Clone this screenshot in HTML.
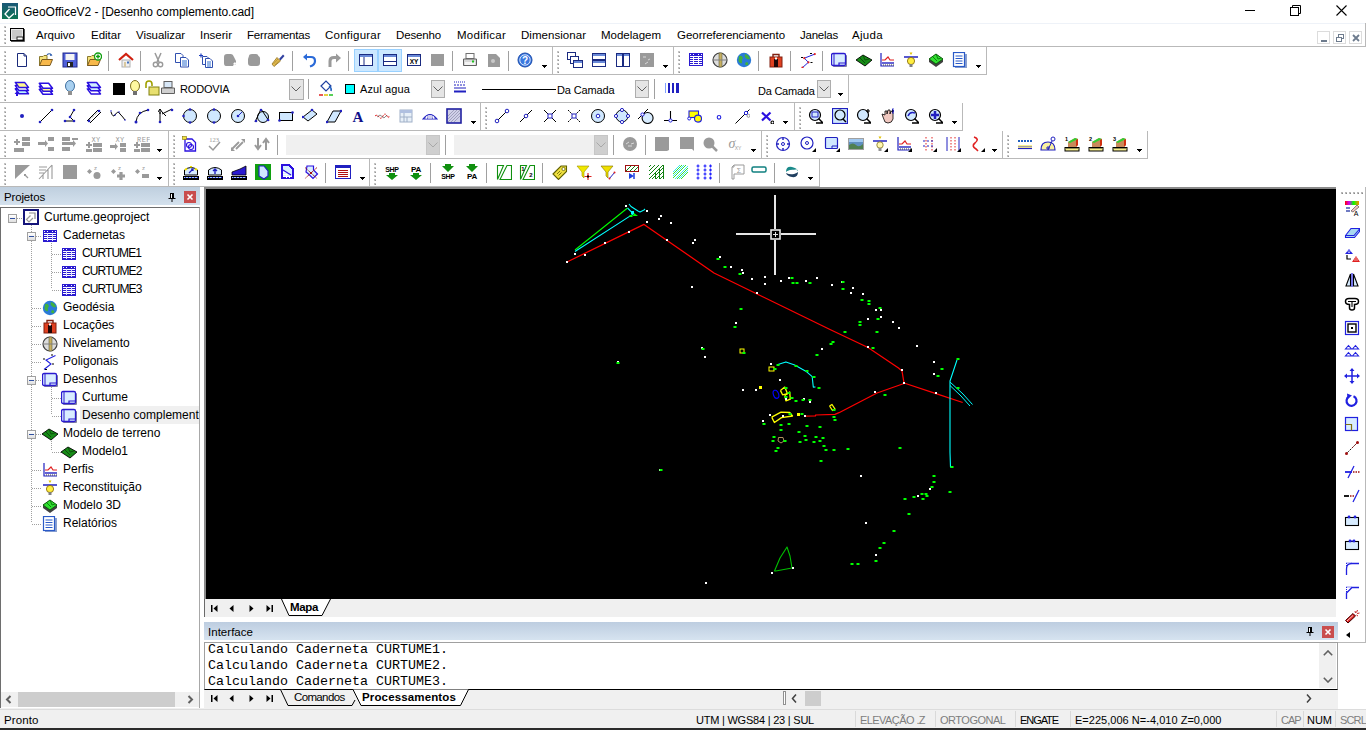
<!DOCTYPE html>
<html><head><meta charset="utf-8"><title>GeoOfficeV2</title>
<style>
html,body{margin:0;padding:0;width:1366px;height:730px;overflow:hidden;background:#fff;position:relative}
div,span,svg{position:absolute;display:block}
span{white-space:nowrap}
</style></head><body>
<svg style="left:2px;top:3px;" width="16" height="16" viewBox="0 0 16 16"><defs><linearGradient id="ag" x1="0" y1="0" x2="0" y2="1"><stop offset="0" stop-color="#1b5878"/><stop offset="1" stop-color="#0e7552"/></linearGradient></defs><rect x="0" y="0" width="16" height="16" fill="url(#ag)"/><path d="M6 4H13.5V12" fill="none" stroke="#fff" stroke-width="1.2"/><path d="M7.5 6L3 11L7 15L12 10.5" fill="none" stroke="#fff" stroke-width="1.3"/></svg>
<span style="left:23px;top:5.84px;font:normal 12px/1 'Liberation Sans',sans-serif;color:#000;letter-spacing:-0.023px;">GeoOfficeV2 - [Desenho complemento.cad]</span>
<div style="left:1245px;top:10px;width:10px;height:1px;background:#000"></div>
<svg style="left:1290px;top:5px;" width="11" height="11" viewBox="0 0 11 11"><path d="M2.5 2.5V0.5H10.5V8.5H8.5" fill="none" stroke="#000"/><rect x="0.5" y="2.5" width="8" height="8" fill="none" stroke="#000"/></svg>
<svg style="left:1336px;top:5px;" width="11" height="11" viewBox="0 0 11 11"><path d="M0.5 0.5L10.5 10.5M10.5 0.5L0.5 10.5" stroke="#000" stroke-width="1.1"/></svg>
<div style="left:0px;top:23px;width:1366px;height:1px;background:#eef2f8"></div>
<div style="left:0px;top:46px;width:1366px;height:1px;background:#b9b9b9"></div>
<div style="left:1365px;top:23px;width:1px;height:24px;background:#b9b9b9"></div>
<svg style="left:4px;top:26px;" width="2" height="18" viewBox="0 0 2 18"><rect x="0" y="0" width="2" height="2" fill="#c4c4c4"/><rect x="1" y="1" width="1" height="1" fill="#9a9a9a"/><rect x="0" y="4" width="2" height="2" fill="#c4c4c4"/><rect x="1" y="5" width="1" height="1" fill="#9a9a9a"/><rect x="0" y="8" width="2" height="2" fill="#c4c4c4"/><rect x="1" y="9" width="1" height="1" fill="#9a9a9a"/><rect x="0" y="12" width="2" height="2" fill="#c4c4c4"/><rect x="1" y="13" width="1" height="1" fill="#9a9a9a"/><rect x="0" y="16" width="2" height="2" fill="#c4c4c4"/><rect x="1" y="17" width="1" height="1" fill="#9a9a9a"/></svg>
<svg style="left:10px;top:28px;" width="16" height="15" viewBox="0 0 16 15"><rect x="0.5" y="0.5" width="13" height="12" fill="#e8e8e8" stroke="#000"/><rect x="2" y="2" width="10" height="9" fill="#c8c8c8"/><rect x="7" y="9" width="6" height="3" fill="#fff" stroke="#000" stroke-width="0.8"/><path d="M1 13.5H14.5V1" fill="none" stroke="#555" stroke-width="1"/></svg>
<span style="left:36px;top:30.27px;font:normal 11.5px/1 'Liberation Sans',sans-serif;color:#000;letter-spacing:0.001px;">Arquivo</span>
<span style="left:91px;top:30.27px;font:normal 11.5px/1 'Liberation Sans',sans-serif;color:#000;letter-spacing:-0.007px;">Editar</span>
<span style="left:136px;top:30.27px;font:normal 11.5px/1 'Liberation Sans',sans-serif;color:#000;letter-spacing:-0.064px;">Visualizar</span>
<span style="left:200px;top:30.27px;font:normal 11.5px/1 'Liberation Sans',sans-serif;color:#000;letter-spacing:0.007px;">Inserir</span>
<span style="left:247px;top:30.27px;font:normal 11.5px/1 'Liberation Sans',sans-serif;color:#000;letter-spacing:-0.199px;">Ferramentas</span>
<span style="left:325px;top:30.27px;font:normal 11.5px/1 'Liberation Sans',sans-serif;color:#000;letter-spacing:0.231px;">Configurar</span>
<span style="left:396px;top:30.27px;font:normal 11.5px/1 'Liberation Sans',sans-serif;color:#000;letter-spacing:-0.148px;">Desenho</span>
<span style="left:457px;top:30.27px;font:normal 11.5px/1 'Liberation Sans',sans-serif;color:#000;letter-spacing:0.261px;">Modificar</span>
<span style="left:521px;top:30.27px;font:normal 11.5px/1 'Liberation Sans',sans-serif;color:#000;letter-spacing:0.041px;">Dimensionar</span>
<span style="left:601px;top:30.27px;font:normal 11.5px/1 'Liberation Sans',sans-serif;color:#000;letter-spacing:-0.010px;">Modelagem</span>
<span style="left:677px;top:30.27px;font:normal 11.5px/1 'Liberation Sans',sans-serif;color:#000;letter-spacing:-0.035px;">Georreferenciamento</span>
<span style="left:800px;top:30.27px;font:normal 11.5px/1 'Liberation Sans',sans-serif;color:#000;letter-spacing:-0.234px;">Janelas</span>
<span style="left:852px;top:30.27px;font:normal 11.5px/1 'Liberation Sans',sans-serif;color:#000;letter-spacing:0.317px;">Ajuda</span>
<div style="left:1317px;top:31px;width:13px;height:13px;border:1px solid #dcdcdc;box-sizing:border-box;background:#fff"></div>
<div style="left:1333px;top:31px;width:13px;height:13px;border:1px solid #dcdcdc;box-sizing:border-box;background:#fff"></div>
<div style="left:1349px;top:31px;width:13px;height:13px;border:1px solid #dcdcdc;box-sizing:border-box;background:#fff"></div>
<div style="left:1321px;top:40px;width:6px;height:2px;background:#6d7b8d"></div>
<svg style="left:1336px;top:34px;" width="8" height="8" viewBox="0 0 8 8"><rect x="2.5" y="0.5" width="5" height="4" fill="none" stroke="#6d7b8d"/><rect x="0.5" y="3.5" width="5" height="4" fill="#fff" stroke="#6d7b8d"/></svg>
<svg style="left:1352px;top:34px;" width="8" height="8" viewBox="0 0 8 8"><path d="M1 1L7 7M7 1L1 7" stroke="#6d7b8d" stroke-width="1.8"/></svg>
<div style="left:0px;top:74px;width:553px;height:1px;background:#b9b9b9"></div>
<div style="left:552px;top:47px;width:1px;height:28px;background:#b9b9b9"></div>
<svg style="left:4px;top:51px;" width="2" height="22" viewBox="0 0 2 22"><rect x="0" y="0" width="2" height="2" fill="#c4c4c4"/><rect x="1" y="1" width="1" height="1" fill="#9a9a9a"/><rect x="0" y="4" width="2" height="2" fill="#c4c4c4"/><rect x="1" y="5" width="1" height="1" fill="#9a9a9a"/><rect x="0" y="8" width="2" height="2" fill="#c4c4c4"/><rect x="1" y="9" width="1" height="1" fill="#9a9a9a"/><rect x="0" y="12" width="2" height="2" fill="#c4c4c4"/><rect x="1" y="13" width="1" height="1" fill="#9a9a9a"/><rect x="0" y="16" width="2" height="2" fill="#c4c4c4"/><rect x="1" y="17" width="1" height="1" fill="#9a9a9a"/><rect x="0" y="20" width="2" height="2" fill="#c4c4c4"/><rect x="1" y="21" width="1" height="1" fill="#9a9a9a"/></svg>
<svg style="left:14px;top:52px;" width="16" height="16" viewBox="0 0 16 16"><path d="M3.5 1.5H10L12.5 4V14.5H3.5Z" fill="#fff" stroke="#1a2a7a"/><path d="M10 1.5V4H12.5" fill="none" stroke="#1a2a7a"/></svg>
<svg style="left:38px;top:52px;" width="16" height="16" viewBox="0 0 16 16"><path d="M1.5 4.5H5L6 3.5H9V13.5H1.5Z" fill="#f5e27a" stroke="#8a7a30"/><path d="M1.5 13.5L4 7.5H14.5L12 13.5Z" fill="#f7b84a" stroke="#7a5a20"/><path d="M9 3Q11 0.5 13.5 3" fill="none" stroke="#3060b0" stroke-width="1.2"/><path d="M12.5 1.5L14.5 3.5L12 4Z" fill="#3060b0"/></svg>
<svg style="left:62px;top:52px;" width="16" height="16" viewBox="0 0 16 16"><rect x="1" y="1" width="14" height="14" fill="#5060d8" stroke="#202890"/><rect x="3.5" y="2" width="9" height="6" fill="#f4f4f4"/><rect x="5" y="10" width="6" height="5" fill="#222"/><rect x="6" y="11" width="2" height="3" fill="#fff"/></svg>
<svg style="left:86px;top:52px;" width="16" height="16" viewBox="0 0 16 16"><path d="M1.5 4.5H5L6 3.5H9V13.5H1.5Z" fill="#f5e27a" stroke="#8a7a30"/><path d="M1.5 13.5L4 7.5H14.5L12 13.5Z" fill="#f7b84a" stroke="#7a5a20"/><circle cx="12" cy="4.5" r="3.5" fill="#fff" stroke="#10a010" stroke-width="1.3"/><path d="M12 2.5V6.5M10 4.5H14" stroke="#10a010" stroke-width="1.5"/></svg>
<div style="left:108px;top:51px;width:1px;height:20px;background:#a0a0a0"></div>
<svg style="left:118px;top:52px;" width="16" height="16" viewBox="0 0 16 16"><path d="M1 8L8 2L15 8" fill="none" stroke="#d02010" stroke-width="2.2"/><rect x="4" y="8" width="8" height="7" fill="#f0f0f0" stroke="#b0b0b0"/><rect x="6" y="10" width="2" height="5" fill="#d8c8a0"/><rect x="9" y="9.5" width="2" height="2" fill="#4070c0"/></svg>
<div style="left:140px;top:51px;width:1px;height:20px;background:#a0a0a0"></div>
<svg style="left:150px;top:52px;" width="16" height="16" viewBox="0 0 16 16"><path d="M5 1L9 10M11 1L7 10" stroke="#9a9a9a" stroke-width="1.5"/><circle cx="5.5" cy="12.5" r="2.2" fill="none" stroke="#9a9a9a" stroke-width="1.4"/><circle cx="10.5" cy="12.5" r="2.2" fill="none" stroke="#9a9a9a" stroke-width="1.4"/></svg>
<svg style="left:174px;top:52px;" width="16" height="16" viewBox="0 0 16 16"><path d="M1.5 1.5H7L9 3.5V10.5H1.5Z" fill="#fff" stroke="#3050b0"/><path d="M6.5 5.5H12L14.5 8V15H6.5Z" fill="#fff" stroke="#3050b0"/><path d="M8 9H13M8 11H13M8 13H13" stroke="#3070d0"/></svg>
<svg style="left:198px;top:52px;" width="16" height="16" viewBox="0 0 16 16"><path d="M1 3.5H5M3 1.5V5.5" stroke="#2040c0" stroke-width="1.2"/><path d="M4.5 4.5H9L11 6.5V12.5H4.5Z" fill="#fff" stroke="#3050b0"/><path d="M7.5 6.5H12L14.5 9V15.5H7.5Z" fill="#fff" stroke="#3050b0"/><path d="M9 10H13M9 12H13M9 14H13" stroke="#3070d0"/></svg>
<svg style="left:222px;top:52px;" width="16" height="16" viewBox="0 0 16 16"><path d="M2 5Q2 2 5 2H9Q11 2 12 5L14 9V13L12 12L11 14H4Q2 14 2 11Z" fill="#9a9a9a"/><path d="M11 12L13 10L15 13Z" fill="#fff"/></svg>
<svg style="left:246px;top:52px;" width="16" height="16" viewBox="0 0 16 16"><path d="M3 4Q3 2 6 2H10Q12 2 12.5 4Q14.5 5 14 8V11Q14 14 11 14H5Q2 14 2 11V7Z" fill="#9a9a9a"/></svg>
<svg style="left:270px;top:52px;" width="16" height="16" viewBox="0 0 16 16"><path d="M9 7L13 2.5L14.5 4L10.5 8.5Z" fill="#3040a0"/><path d="M2 12L7 5.5L10.5 9L4 14.5Z" fill="#e8c050" stroke="#907020" stroke-width="0.8"/><path d="M3.5 12L8 7M5 13L9 8.5" stroke="#a08030" stroke-width="0.7"/></svg>
<div style="left:292px;top:51px;width:1px;height:20px;background:#a0a0a0"></div>
<svg style="left:302px;top:52px;" width="16" height="16" viewBox="0 0 16 16"><path d="M4 5H9Q13 5 13 9Q13 13 8 14.5" fill="none" stroke="#2a6ad8" stroke-width="2.2"/><path d="M1 5L5 1.5V8.5Z" fill="#2a6ad8"/></svg>
<svg style="left:326px;top:52px;" width="16" height="16" viewBox="0 0 16 16"><path d="M4 15V9Q4 5.5 8 5.5H11" fill="none" stroke="#9a9a9a" stroke-width="3"/><path d="M10 1.5L15 6L10 10.5Z" fill="#9a9a9a"/></svg>
<div style="left:348px;top:51px;width:1px;height:20px;background:#a0a0a0"></div>
<div style="left:354px;top:49px;width:24px;height:23px;background:#cce8ff;border:1px solid #99d1ff;box-sizing:border-box"></div>
<div style="left:378px;top:49px;width:24px;height:23px;background:#cce8ff;border:1px solid #99d1ff;box-sizing:border-box"></div>
<svg style="left:358px;top:52px;" width="16" height="16" viewBox="0 0 16 16"><rect x="1.5" y="2.5" width="13" height="11" fill="#fff" stroke="#1a2a80"/><rect x="2" y="3" width="12" height="2" fill="#6a8ad8"/><path d="M6 5V13" stroke="#1a2a80"/></svg>
<svg style="left:382px;top:52px;" width="16" height="16" viewBox="0 0 16 16"><rect x="1.5" y="2.5" width="13" height="11" fill="#fff" stroke="#1a2a80"/><rect x="2" y="3" width="12" height="2" fill="#6a8ad8"/><path d="M2 9.5H14" stroke="#1a2a80"/></svg>
<svg style="left:406px;top:52px;" width="16" height="16" viewBox="0 0 16 16"><rect x="1.5" y="2.5" width="13" height="11" fill="#fff" stroke="#1a2a80"/><rect x="2" y="3" width="12" height="2" fill="#6a8ad8"/><text x="8" y="12" font-family="Liberation Sans" font-weight="bold" font-size="6.5" text-anchor="middle" fill="#000">XY</text></svg>
<svg style="left:430px;top:52px;" width="16" height="16" viewBox="0 0 16 16"><rect x="1" y="2" width="13" height="12" fill="#9a9a9a"/></svg>
<div style="left:452px;top:51px;width:1px;height:20px;background:#a0a0a0"></div>
<svg style="left:462px;top:52px;" width="16" height="16" viewBox="0 0 16 16"><rect x="4" y="1.5" width="8" height="5" fill="#fff" stroke="#707070"/><path d="M1.5 7H14.5V13.5H1.5Z" fill="#d8d8d8" stroke="#606060"/><rect x="3" y="10" width="10" height="3" fill="#f4f4f4"/><rect x="10" y="8.5" width="2" height="2" fill="#20c020"/></svg>
<svg style="left:486px;top:52px;" width="16" height="16" viewBox="0 0 16 16"><path d="M2 2H10L14 6V15H2Z" fill="#9a9a9a"/><circle cx="7" cy="9" r="2" fill="#c8c8c8"/></svg>
<div style="left:508px;top:51px;width:1px;height:20px;background:#a0a0a0"></div>
<svg style="left:517px;top:52px;" width="16" height="16" viewBox="0 0 16 16"><circle cx="8" cy="8" r="7" fill="#3a78e0" stroke="#1848a8"/><circle cx="8" cy="8" r="5.2" fill="none" stroke="#fff" stroke-width="0.8"/><text x="8" y="12" font-family="Liberation Sans" font-weight="bold" font-size="10" text-anchor="middle" fill="#fff">?</text></svg>
<svg style="left:542px;top:65px;" width="5" height="3" viewBox="0 0 5 3"><rect x="0" y="0" width="5" height="1" fill="#000"/><rect x="1" y="1" width="3" height="1" fill="#000"/><rect x="2" y="2" width="1" height="1" fill="#000"/></svg>
<div style="left:553px;top:74px;width:121px;height:1px;background:#b9b9b9"></div>
<div style="left:673px;top:47px;width:1px;height:28px;background:#b9b9b9"></div>
<svg style="left:557px;top:51px;" width="2" height="22" viewBox="0 0 2 22"><rect x="0" y="0" width="2" height="2" fill="#c4c4c4"/><rect x="1" y="1" width="1" height="1" fill="#9a9a9a"/><rect x="0" y="4" width="2" height="2" fill="#c4c4c4"/><rect x="1" y="5" width="1" height="1" fill="#9a9a9a"/><rect x="0" y="8" width="2" height="2" fill="#c4c4c4"/><rect x="1" y="9" width="1" height="1" fill="#9a9a9a"/><rect x="0" y="12" width="2" height="2" fill="#c4c4c4"/><rect x="1" y="13" width="1" height="1" fill="#9a9a9a"/><rect x="0" y="16" width="2" height="2" fill="#c4c4c4"/><rect x="1" y="17" width="1" height="1" fill="#9a9a9a"/><rect x="0" y="20" width="2" height="2" fill="#c4c4c4"/><rect x="1" y="21" width="1" height="1" fill="#9a9a9a"/></svg>
<svg style="left:567px;top:52px;" width="16" height="16" viewBox="0 0 16 16"><rect x="0.5" y="0.5" width="8" height="7" fill="#fff" stroke="#1a2a80"/><rect x="3.5" y="4.5" width="8" height="7" fill="#fff" stroke="#1a2a80"/><rect x="6.5" y="8.5" width="9" height="7" fill="#fff" stroke="#1a2a80"/><rect x="7" y="9" width="8" height="2" fill="#6a8ad8"/></svg>
<svg style="left:591px;top:52px;" width="16" height="16" viewBox="0 0 16 16"><rect x="1.5" y="1.5" width="13" height="6" fill="#fff" stroke="#1a2a80"/><rect x="1.5" y="8.5" width="13" height="6" fill="#fff" stroke="#1a2a80"/><rect x="2" y="2" width="12" height="2" fill="#6a8ad8"/><rect x="2" y="9" width="12" height="2" fill="#6a8ad8"/></svg>
<svg style="left:615px;top:52px;" width="16" height="16" viewBox="0 0 16 16"><rect x="1.5" y="1.5" width="6" height="13" fill="#fff" stroke="#1a2a80"/><rect x="8.5" y="1.5" width="6" height="13" fill="#fff" stroke="#1a2a80"/><rect x="2" y="2" width="5" height="2" fill="#6a8ad8"/><rect x="9" y="2" width="5" height="2" fill="#6a8ad8"/></svg>
<svg style="left:639px;top:52px;" width="16" height="16" viewBox="0 0 16 16"><rect x="1" y="1" width="14" height="14" fill="#9a9a9a"/><path d="M4 5H7M9 8L11 7M6 12L9 10" stroke="#d8d8d8"/></svg>
<svg style="left:663px;top:65px;" width="5" height="3" viewBox="0 0 5 3"><rect x="0" y="0" width="5" height="1" fill="#000"/><rect x="1" y="1" width="3" height="1" fill="#000"/><rect x="2" y="2" width="1" height="1" fill="#000"/></svg>
<div style="left:674px;top:74px;width:313px;height:1px;background:#b9b9b9"></div>
<div style="left:986px;top:47px;width:1px;height:28px;background:#b9b9b9"></div>
<svg style="left:678px;top:51px;" width="2" height="22" viewBox="0 0 2 22"><rect x="0" y="0" width="2" height="2" fill="#c4c4c4"/><rect x="1" y="1" width="1" height="1" fill="#9a9a9a"/><rect x="0" y="4" width="2" height="2" fill="#c4c4c4"/><rect x="1" y="5" width="1" height="1" fill="#9a9a9a"/><rect x="0" y="8" width="2" height="2" fill="#c4c4c4"/><rect x="1" y="9" width="1" height="1" fill="#9a9a9a"/><rect x="0" y="12" width="2" height="2" fill="#c4c4c4"/><rect x="1" y="13" width="1" height="1" fill="#9a9a9a"/><rect x="0" y="16" width="2" height="2" fill="#c4c4c4"/><rect x="1" y="17" width="1" height="1" fill="#9a9a9a"/><rect x="0" y="20" width="2" height="2" fill="#c4c4c4"/><rect x="1" y="21" width="1" height="1" fill="#9a9a9a"/></svg>
<svg style="left:688px;top:52px;" width="16" height="16" viewBox="0 0 16 16"><rect x="1" y="1" width="14" height="13" fill="#2a1ad0"/><rect x="2" y="4" width="12" height="1" fill="#fff"/><rect x="2" y="6" width="12" height="1" fill="#fff"/><rect x="2" y="8" width="12" height="1" fill="#fff"/><rect x="2" y="10" width="12" height="1" fill="#fff"/><rect x="2" y="12" width="12" height="1" fill="#fff"/><rect x="2" y="2" width="1" height="1" fill="#fff"/><rect x="5" y="2" width="1" height="1" fill="#fff"/><rect x="10" y="2" width="1" height="1" fill="#fff"/><rect x="13" y="2" width="1" height="1" fill="#fff"/><rect x="5" y="4" width="1" height="9" fill="#fff"/><rect x="10" y="4" width="1" height="9" fill="#fff"/></svg>
<svg style="left:712px;top:52px;" width="16" height="16" viewBox="0 0 16 16"><circle cx="8" cy="8" r="7" fill="#dcdcdc" stroke="#404040" stroke-width="1.2"/><rect x="7" y="1" width="3" height="14" fill="#c8b060" stroke="#606040" stroke-width="0.6"/><path d="M1 8H15" stroke="#808080"/></svg>
<svg style="left:736px;top:52px;" width="16" height="16" viewBox="0 0 16 16"><circle cx="8" cy="8" r="7.2" fill="#2a7ad8"/><path d="M3 4Q6 3 7 6Q5 8 6 11Q4 12 2.5 9Z M9 2Q13 3 14 7Q11 8 10 6Q8 5 9 2Z M10 10Q13 10 12 13Q10 14 9 12Z" fill="#40b040"/></svg>
<div style="left:758px;top:51px;width:1px;height:20px;background:#a0a0a0"></div>
<svg style="left:768px;top:52px;" width="16" height="16" viewBox="0 0 16 16"><rect x="2" y="5" width="12" height="10" fill="#e04020" stroke="#802010"/><path d="M5 5V2.5H11V5" fill="none" stroke="#802010" stroke-width="1.4"/><rect x="6" y="7" width="4" height="8" fill="#200808"/><rect x="7" y="5.5" width="2" height="2" fill="#fff"/></svg>
<div style="left:790px;top:51px;width:1px;height:20px;background:#a0a0a0"></div>
<svg style="left:800px;top:52px;" width="16" height="16" viewBox="0 0 16 16"><path d="M4.3 6.2L8.4 10.3L2.5 15.6M4.3 6.2L14.8 2.1" fill="none" stroke="#2020e0" stroke-width="1"/><circle cx="4.3" cy="6.2" r="1.1" fill="#e02020"/><circle cx="8.4" cy="10.3" r="1.1" fill="#e02020"/><circle cx="14.8" cy="2.1" r="1.1" fill="#e02020"/><circle cx="2.5" cy="15.6" r="1.1" fill="#e02020"/><path d="M1 5.5H3M10 1.5H12M10.5 10.5H12.5" stroke="#000" stroke-width="1"/></svg>
<div style="left:822px;top:51px;width:1px;height:20px;background:#a0a0a0"></div>
<svg style="left:831px;top:52px;" width="16" height="16" viewBox="0 0 16 16"><rect x="2" y="3" width="14" height="12" rx="1" fill="#8080a0"/><rect x="0.5" y="1.5" width="14" height="12" rx="1.5" fill="#d8ecff" stroke="#2a1ad0" stroke-width="1.3"/><path d="M3 2V13" stroke="#2a1ad0" stroke-width="1"/><path d="M8 13.5V11H14.5" fill="none" stroke="#2a1ad0" stroke-width="1.2"/></svg>
<svg style="left:856px;top:52px;" width="16" height="16" viewBox="0 0 16 16"><path d="M0 8L7 3L16 8L9 14Z" fill="#168a16" stroke="#000" stroke-width="0.9"/><path d="M4 6L9 11M7 3L9 8L13 7" fill="none" stroke="#0a4a0a" stroke-width="0.9"/></svg>
<svg style="left:879px;top:52px;" width="16" height="16" viewBox="0 0 16 16"><path d="M2 1V14H15" fill="none" stroke="#2020c0" stroke-width="1.2"/><path d="M3 8H6L9 5L11 8H15" fill="none" stroke="#e02020" stroke-width="1.2"/><path d="M3 11H15" stroke="#2020c0" stroke-width="1.4"/><path d="M4 13H15" stroke="#404040" stroke-dasharray="1 1"/></svg>
<svg style="left:903px;top:52px;" width="16" height="16" viewBox="0 0 16 16"><path d="M1 5H15" stroke="#2020c0" stroke-width="1.5"/><path d="M6.5 0.5H9.5L8 3Z" fill="#e0c000"/><circle cx="8" cy="9" r="3.6" fill="#ffee40" stroke="#806000" stroke-width="0.8"/><rect x="6.5" y="12" width="3" height="3" fill="#808080"/></svg>
<svg style="left:928px;top:52px;" width="16" height="16" viewBox="0 0 16 16"><path d="M1 7L8 2L15 7L15 10L8 15L1 10Z" fill="#404040"/><path d="M1 7L8 2L15 7L8 12Z" fill="#30e030" stroke="#106010"/><path d="M5 5L9 9M8 2L10 7L13 6" fill="none" stroke="#108010"/></svg>
<svg style="left:952px;top:52px;" width="16" height="16" viewBox="0 0 16 16"><rect x="3" y="2" width="12" height="14" fill="#8aa0d0"/><rect x="1.5" y="0.5" width="11" height="14" fill="#fff" stroke="#2a5ac8" stroke-width="1.2"/><path d="M3.5 4H10.5M3.5 6.5H10.5M3.5 9H10.5M3.5 11.5H10.5" stroke="#2a5ac8"/></svg>
<svg style="left:976px;top:65px;" width="5" height="3" viewBox="0 0 5 3"><rect x="0" y="0" width="5" height="1" fill="#000"/><rect x="1" y="1" width="3" height="1" fill="#000"/><rect x="2" y="2" width="1" height="1" fill="#000"/></svg>
<div style="left:0px;top:102px;width:849px;height:1px;background:#b9b9b9"></div>
<div style="left:848px;top:75px;width:1px;height:28px;background:#b9b9b9"></div>
<svg style="left:4px;top:79px;" width="2" height="22" viewBox="0 0 2 22"><rect x="0" y="0" width="2" height="2" fill="#c4c4c4"/><rect x="1" y="1" width="1" height="1" fill="#9a9a9a"/><rect x="0" y="4" width="2" height="2" fill="#c4c4c4"/><rect x="1" y="5" width="1" height="1" fill="#9a9a9a"/><rect x="0" y="8" width="2" height="2" fill="#c4c4c4"/><rect x="1" y="9" width="1" height="1" fill="#9a9a9a"/><rect x="0" y="12" width="2" height="2" fill="#c4c4c4"/><rect x="1" y="13" width="1" height="1" fill="#9a9a9a"/><rect x="0" y="16" width="2" height="2" fill="#c4c4c4"/><rect x="1" y="17" width="1" height="1" fill="#9a9a9a"/><rect x="0" y="20" width="2" height="2" fill="#c4c4c4"/><rect x="1" y="21" width="1" height="1" fill="#9a9a9a"/></svg>
<svg style="left:14px;top:80px;" width="16" height="16" viewBox="0 0 16 16"><path d="M1.3 8.8H10.6L14.5 13.8H5Z" fill="#b8f0ff" stroke="#2a10e0" stroke-width="1.5" stroke-linejoin="round"/><path d="M1.3 5.6H10.6L14.5 10.6H5Z" fill="#fff" stroke="#2a10e0" stroke-width="1.5" stroke-linejoin="round"/><path d="M1.3 2.4H10.6L14.5 7.4H5Z" fill="#fff890" stroke="#2a10e0" stroke-width="1.5" stroke-linejoin="round"/><path d="M3 11L5.5 14H4V16H2V14H0.5Z" fill="#2a10e0"/></svg>
<svg style="left:38px;top:80px;" width="16" height="16" viewBox="0 0 16 16"><path d="M1.3 9.3H10.6L14.5 14.3H5Z" fill="#fff" stroke="#2a10e0" stroke-width="1.5" stroke-linejoin="round"/><path d="M1.3 6.3H10.6L14.5 11.3H5Z" fill="#fff890" stroke="#2a10e0" stroke-width="1.5" stroke-linejoin="round"/><path d="M1.3 3.3H10.6L14.5 8.3H5Z" fill="#fff" stroke="#2a10e0" stroke-width="1.5" stroke-linejoin="round"/></svg>
<svg style="left:62px;top:80px;" width="16" height="16" viewBox="0 0 16 16"><ellipse cx="8" cy="6" rx="4.5" ry="5.5" fill="#a8d0f0" stroke="#4070a0"/><rect x="6" y="11" width="4" height="4" fill="#909090"/></svg>
<svg style="left:86px;top:80px;" width="16" height="16" viewBox="0 0 16 16"><path d="M1.3 8.9H10.6L14.5 13.9H5Z" fill="#fff" stroke="#2a10e0" stroke-width="1.5" stroke-linejoin="round"/><path d="M1.3 5.7H10.6L14.5 10.7H5Z" fill="#d0f0ff" stroke="#2a10e0" stroke-width="1.5" stroke-linejoin="round"/><path d="M1.3 2.5H10.6L14.5 7.5H5Z" fill="#d0f0ff" stroke="#2a10e0" stroke-width="1.5" stroke-linejoin="round"/></svg>
<div style="left:113px;top:83px;width:12px;height:12px;background:#000"></div>
<svg style="left:127px;top:80px;" width="16" height="16" viewBox="0 0 16 16"><ellipse cx="8" cy="6" rx="4.5" ry="5.5" fill="#fff8a0" stroke="#807020"/><rect x="6" y="11" width="4" height="4" fill="#707070"/></svg>
<svg style="left:144px;top:80px;" width="16" height="16" viewBox="0 0 16 16"><path d="M2 8V4Q2 1 5 1Q8 1 8 4V6" fill="none" stroke="#a0a000" stroke-width="1.6"/><rect x="5" y="7" width="10" height="8" fill="#e8e070" stroke="#808010"/></svg>
<svg style="left:160px;top:80px;" width="16" height="16" viewBox="0 0 16 16"><rect x="4" y="1.5" width="8" height="6" fill="#d8e8f8" stroke="#606060"/><path d="M1.5 8H14.5V13.5H1.5Z" fill="#d0d0d0" stroke="#606060"/></svg>
<span style="left:180px;top:83.69px;font:normal 11px/1 'Liberation Sans',sans-serif;color:#000;letter-spacing:-0.176px;">RODOVIA</span>
<div style="left:289px;top:79px;width:15px;height:21px;background:#e5e5e5;border:1px solid #adadad;box-sizing:border-box"></div>
<svg style="left:291px;top:86px;" width="10" height="6" viewBox="0 0 10 6"><path d="M0.5 0.5L5 5L9.5 0.5" fill="none" stroke="#606060"/></svg>
<div style="left:308px;top:79px;width:1px;height:20px;background:#a0a0a0"></div>
<svg style="left:318px;top:80px;" width="16" height="16" viewBox="0 0 16 16"><path d="M3 6L8 1L13 6L8 11Z" fill="#fff" stroke="#2040a0" stroke-width="1.2"/><path d="M11 6Q14 8 13 11" fill="none" stroke="#2060c0" stroke-width="1.5"/><path d="M1 15H5" stroke="#e02020" stroke-width="1.5"/><path d="M6 15H10" stroke="#e0c000" stroke-width="1.5"/><path d="M11 15H15" stroke="#20c020" stroke-width="1.5"/></svg>
<div style="left:345px;top:84px;width:10px;height:10px;background:#00ffff;border:1px solid #000;box-sizing:border-box"></div>
<span style="left:360px;top:83.69px;font:normal 11px/1 'Liberation Sans',sans-serif;color:#000;letter-spacing:0.119px;">Azul agua</span>
<div style="left:431px;top:80px;width:14px;height:18px;background:#e5e5e5;border:1px solid #adadad;box-sizing:border-box"></div>
<svg style="left:433px;top:86px;" width="10" height="6" viewBox="0 0 10 6"><path d="M0.5 0.5L5 5L9.5 0.5" fill="none" stroke="#606060"/></svg>
<svg style="left:452px;top:80px;" width="16" height="16" viewBox="0 0 16 16"><path d="M2 2H14" stroke="#2020c0" stroke-dasharray="1 1"/><path d="M2 5H14" stroke="#2020c0" stroke-dasharray="2 1"/><path d="M2 8H14" stroke="#2020c0"/><path d="M2 11.5H14" stroke="#2020c0" stroke-width="2"/></svg>
<div style="left:482px;top:89px;width:74px;height:1px;background:#000"></div>
<span style="left:557px;top:84.69px;font:normal 11px/1 'Liberation Sans',sans-serif;color:#000;letter-spacing:-0.133px;">Da Camada</span>
<div style="left:635px;top:80px;width:14px;height:18px;background:#e5e5e5;border:1px solid #adadad;box-sizing:border-box"></div>
<svg style="left:637px;top:86px;" width="10" height="6" viewBox="0 0 10 6"><path d="M0.5 0.5L5 5L9.5 0.5" fill="none" stroke="#606060"/></svg>
<div style="left:654px;top:79px;width:1px;height:20px;background:#a0a0a0"></div>
<svg style="left:664px;top:81px;" width="16" height="16" viewBox="0 0 16 16"><rect x="1" y="2" width="1" height="10" fill="#80a0ff"/><rect x="4" y="2" width="2" height="10" fill="#2020c0"/><rect x="8" y="2" width="2" height="10" fill="#2020c0"/><rect x="12" y="2" width="3" height="10" fill="#2020c0"/></svg>
<span style="left:758px;top:85.69px;font:normal 11px/1 'Liberation Sans',sans-serif;color:#000;letter-spacing:-0.244px;">Da Camada</span>
<div style="left:817px;top:80px;width:14px;height:18px;background:#e5e5e5;border:1px solid #adadad;box-sizing:border-box"></div>
<svg style="left:819px;top:86px;" width="10" height="6" viewBox="0 0 10 6"><path d="M0.5 0.5L5 5L9.5 0.5" fill="none" stroke="#606060"/></svg>
<svg style="left:838px;top:93px;" width="5" height="3" viewBox="0 0 5 3"><rect x="0" y="0" width="5" height="1" fill="#000"/><rect x="1" y="1" width="3" height="1" fill="#000"/><rect x="2" y="2" width="1" height="1" fill="#000"/></svg>
<div style="left:0px;top:130px;width:481px;height:1px;background:#b9b9b9"></div>
<div style="left:480px;top:103px;width:1px;height:28px;background:#b9b9b9"></div>
<svg style="left:4px;top:107px;" width="2" height="22" viewBox="0 0 2 22"><rect x="0" y="0" width="2" height="2" fill="#c4c4c4"/><rect x="1" y="1" width="1" height="1" fill="#9a9a9a"/><rect x="0" y="4" width="2" height="2" fill="#c4c4c4"/><rect x="1" y="5" width="1" height="1" fill="#9a9a9a"/><rect x="0" y="8" width="2" height="2" fill="#c4c4c4"/><rect x="1" y="9" width="1" height="1" fill="#9a9a9a"/><rect x="0" y="12" width="2" height="2" fill="#c4c4c4"/><rect x="1" y="13" width="1" height="1" fill="#9a9a9a"/><rect x="0" y="16" width="2" height="2" fill="#c4c4c4"/><rect x="1" y="17" width="1" height="1" fill="#9a9a9a"/><rect x="0" y="20" width="2" height="2" fill="#c4c4c4"/><rect x="1" y="21" width="1" height="1" fill="#9a9a9a"/></svg>
<svg style="left:14px;top:108px;" width="16" height="16" viewBox="0 0 16 16"><circle cx="8" cy="8" r="2" fill="#2020c0"/></svg>
<svg style="left:38px;top:108px;" width="16" height="16" viewBox="0 0 16 16"><path d="M2 14L14 2" stroke="#000"/><circle cx="2" cy="14" r="1.3" fill="#2020c0"/><circle cx="14" cy="2" r="1.3" fill="#2020c0"/></svg>
<svg style="left:62px;top:108px;" width="16" height="16" viewBox="0 0 16 16"><path d="M3 13H12L8 9L12 2" fill="none" stroke="#000"/><circle cx="3" cy="13" r="1.3" fill="#2020c0"/><circle cx="12" cy="13" r="1.3" fill="#2020c0"/><circle cx="8" cy="9" r="1.3" fill="#2020c0"/><circle cx="12" cy="2" r="1.3" fill="#2020c0"/></svg>
<svg style="left:86px;top:108px;" width="16" height="16" viewBox="0 0 16 16"><path d="M1 13L12 2M4 15L15 4" stroke="#000"/><path d="M3 12L13 3" stroke="#808080" stroke-dasharray="1 1"/><circle cx="3" cy="13" r="1.3" fill="#2020c0"/><circle cx="13" cy="3" r="1.3" fill="#2020c0"/></svg>
<svg style="left:110px;top:108px;" width="16" height="16" viewBox="0 0 16 16"><path d="M1 4Q3 10 5 7Q8 2 10 6Q13 9 15 12" fill="none" stroke="#000"/><circle cx="1" cy="3" r="0.8" fill="#2020c0"/><circle cx="5" cy="7" r="0.8" fill="#2020c0"/><circle cx="9" cy="4" r="0.8" fill="#2020c0"/><circle cx="15" cy="12" r="0.8" fill="#2020c0"/></svg>
<svg style="left:134px;top:108px;" width="16" height="16" viewBox="0 0 16 16"><path d="M2 14Q3 4 14 2" fill="none" stroke="#000"/><circle cx="2" cy="14" r="1.5" fill="#2020c0"/><circle cx="6" cy="5" r="1.3" fill="#2020c0"/><circle cx="14" cy="2" r="1.3" fill="#2020c0"/></svg>
<svg style="left:158px;top:108px;" width="16" height="16" viewBox="0 0 16 16"><path d="M2 14V4M4 6L14 1M4 4L8 8" fill="none" stroke="#000"/><circle cx="2" cy="14" r="1.3" fill="#2020c0"/><circle cx="14" cy="2" r="1.3" fill="#2020c0"/><path d="M2 1L2 6M0 4L2 1L4 4" fill="none" stroke="#000"/></svg>
<svg style="left:182px;top:108px;" width="16" height="16" viewBox="0 0 16 16"><circle cx="8" cy="8" r="6.5" fill="#d0e8ff" stroke="#000"/><circle cx="8" cy="1.5" r="1.3" fill="#2020c0"/><circle cx="8" cy="14.5" r="1.3" fill="#2020c0"/><circle cx="1.5" cy="8" r="1.3" fill="#2020c0"/></svg>
<svg style="left:206px;top:108px;" width="16" height="16" viewBox="0 0 16 16"><circle cx="8" cy="8" r="6.5" fill="#d0e8ff" stroke="#000"/><circle cx="8" cy="1.5" r="1.3" fill="#2020c0"/><circle cx="8" cy="14.5" r="1.3" fill="#2020c0"/></svg>
<svg style="left:230px;top:108px;" width="16" height="16" viewBox="0 0 16 16"><circle cx="8" cy="8" r="6.5" fill="#d0e8ff" stroke="#000"/><circle cx="8" cy="8" r="1.3" fill="#2020c0"/><path d="M8 8L12 4" stroke="#2020c0"/></svg>
<svg style="left:254px;top:108px;" width="16" height="16" viewBox="0 0 16 16"><circle cx="9" cy="9" r="5.5" fill="#d0e8ff" stroke="#000"/><path d="M1 14L7 1L15 13" fill="none" stroke="#000"/><circle cx="7" cy="2" r="1.3" fill="#2020c0"/><circle cx="2" cy="13" r="1.3" fill="#2020c0"/><circle cx="14" cy="12" r="1.3" fill="#2020c0"/></svg>
<svg style="left:278px;top:108px;" width="16" height="16" viewBox="0 0 16 16"><rect x="1.5" y="4.5" width="13" height="8" fill="#d0e8ff" stroke="#000"/><circle cx="1.5" cy="12.5" r="1.3" fill="#2020c0"/><circle cx="14.5" cy="4.5" r="1.3" fill="#2020c0"/></svg>
<svg style="left:302px;top:108px;" width="16" height="16" viewBox="0 0 16 16"><path d="M1 9L10 2L15 6L6 13Z" fill="#d0e8ff" stroke="#000"/><circle cx="1" cy="9" r="1.3" fill="#2020c0"/><circle cx="10" cy="2" r="1.3" fill="#2020c0"/></svg>
<svg style="left:326px;top:108px;" width="16" height="16" viewBox="0 0 16 16"><path d="M1 14L7 3H15L9 14Z" fill="#d0e8ff" stroke="#000"/><circle cx="1" cy="14" r="1.3" fill="#2020c0"/><circle cx="15" cy="3" r="1.3" fill="#2020c0"/></svg>
<svg style="left:350px;top:108px;" width="16" height="16" viewBox="0 0 16 16"><text x="8" y="14" font-family="Liberation Serif" font-weight="bold" font-size="15" text-anchor="middle" fill="#10108a">A</text></svg>
<svg style="left:374px;top:108px;" width="16" height="16" viewBox="0 0 16 16"><path d="M1 8Q3 6 5 9T9 8T13 8T15 7" fill="none" stroke="#e02020" stroke-width="1" stroke-dasharray="2 1"/><path d="M3 9L6 7L10 10L13 7" fill="none" stroke="#404040" stroke-width="0.6"/></svg>
<svg style="left:398px;top:108px;" width="16" height="16" viewBox="0 0 16 16"><rect x="2" y="2" width="12" height="12" fill="#e8f0f8" stroke="#a0b0c8"/><rect x="2" y="2" width="12" height="3" fill="#b0c0e0"/><path d="M6 5V14M2 9H14M9 9V14" stroke="#a0b0c8"/></svg>
<svg style="left:422px;top:108px;" width="16" height="16" viewBox="0 0 16 16"><path d="M1 11Q8 2 15 11Z" fill="#a0a0e0" stroke="#2020c0" stroke-width="1.2"/><path d="M4 11L5 8M7 11V7M9 11V7M12 11L11 8" stroke="#fff"/></svg>
<svg style="left:446px;top:108px;" width="16" height="16" viewBox="0 0 16 16"><rect x="1" y="1" width="14" height="14" fill="#d0d0e8" stroke="#2020a0" stroke-width="1.6"/><path d="M2 8L8 2M2 14L14 2M8 14L14 8M2 11L11 2M5 14L14 5" stroke="#8080a0" stroke-width="0.6"/></svg>
<svg style="left:471px;top:121px;" width="5" height="3" viewBox="0 0 5 3"><rect x="0" y="0" width="5" height="1" fill="#000"/><rect x="1" y="1" width="3" height="1" fill="#000"/><rect x="2" y="2" width="1" height="1" fill="#000"/></svg>
<div style="left:481px;top:130px;width:314px;height:1px;background:#b9b9b9"></div>
<div style="left:794px;top:103px;width:1px;height:28px;background:#b9b9b9"></div>
<svg style="left:485px;top:107px;" width="2" height="22" viewBox="0 0 2 22"><rect x="0" y="0" width="2" height="2" fill="#c4c4c4"/><rect x="1" y="1" width="1" height="1" fill="#9a9a9a"/><rect x="0" y="4" width="2" height="2" fill="#c4c4c4"/><rect x="1" y="5" width="1" height="1" fill="#9a9a9a"/><rect x="0" y="8" width="2" height="2" fill="#c4c4c4"/><rect x="1" y="9" width="1" height="1" fill="#9a9a9a"/><rect x="0" y="12" width="2" height="2" fill="#c4c4c4"/><rect x="1" y="13" width="1" height="1" fill="#9a9a9a"/><rect x="0" y="16" width="2" height="2" fill="#c4c4c4"/><rect x="1" y="17" width="1" height="1" fill="#9a9a9a"/><rect x="0" y="20" width="2" height="2" fill="#c4c4c4"/><rect x="1" y="21" width="1" height="1" fill="#9a9a9a"/></svg>
<svg style="left:494px;top:108px;" width="16" height="16" viewBox="0 0 16 16"><path d="M3 13L13 3" stroke="#000"/><circle cx="3" cy="13" r="1.8" fill="#fff" stroke="#2020c0"/><circle cx="13" cy="3" r="1.8" fill="#fff" stroke="#2020c0"/></svg>
<svg style="left:518px;top:108px;" width="16" height="16" viewBox="0 0 16 16"><path d="M2 14L14 2" stroke="#000"/><circle cx="8" cy="8" r="1.8" fill="#fff" stroke="#2020c0"/></svg>
<svg style="left:542px;top:108px;" width="16" height="16" viewBox="0 0 16 16"><path d="M2 2L14 14M14 2L2 14" stroke="#000"/><rect x="6" y="6" width="4" height="4" fill="#fff" stroke="#2020c0"/></svg>
<svg style="left:566px;top:108px;" width="16" height="16" viewBox="0 0 16 16"><path d="M2 2L14 14M14 2L2 14" stroke="#000" stroke-dasharray="2 1"/><rect x="6" y="6" width="4" height="4" fill="#fff" stroke="#2020c0"/></svg>
<svg style="left:590px;top:108px;" width="16" height="16" viewBox="0 0 16 16"><circle cx="8" cy="8" r="6.5" fill="#d0e8ff" stroke="#000"/><circle cx="8" cy="8" r="1.8" fill="#fff" stroke="#2020c0"/></svg>
<svg style="left:614px;top:108px;" width="16" height="16" viewBox="0 0 16 16"><circle cx="8" cy="8" r="6" fill="#d0e8ff" stroke="#000"/><circle cx="8" cy="2" r="1.6" fill="#fff" stroke="#2020c0"/><circle cx="8" cy="14" r="1.6" fill="#fff" stroke="#2020c0"/><circle cx="2" cy="8" r="1.6" fill="#fff" stroke="#2020c0"/><circle cx="14" cy="8" r="1.6" fill="#fff" stroke="#2020c0"/></svg>
<svg style="left:638px;top:108px;" width="16" height="16" viewBox="0 0 16 16"><circle cx="9.6" cy="10" r="5.5" fill="#d8ecff" stroke="#000" stroke-width="1.1"/><path d="M0 11L10 1" stroke="#000"/><circle cx="4.5" cy="6.5" r="1.6" fill="#fff" stroke="#2020e0"/></svg>
<svg style="left:662px;top:108px;" width="16" height="16" viewBox="0 0 16 16"><path d="M2 12.5H15M8.5 3V12" stroke="#000" stroke-width="1.1"/><circle cx="8.5" cy="12.5" r="1.6" fill="#fff" stroke="#2020e0"/></svg>
<svg style="left:686px;top:108px;" width="16" height="16" viewBox="0 0 16 16"><rect x="3" y="3" width="9.5" height="6.5" fill="#ffff00" stroke="#2020e0" stroke-width="1.1"/><circle cx="12" cy="10.6" r="3.5" fill="#ffff00" stroke="#2020e0" stroke-width="1.1"/><circle cx="3.2" cy="10.5" r="1.5" fill="#fff" stroke="#2020e0"/></svg>
<svg style="left:710px;top:108px;" width="16" height="16" viewBox="0 0 16 16"><circle cx="9" cy="9.3" r="1.8" fill="#fff" stroke="#2020e0" stroke-width="1.1"/></svg>
<svg style="left:734px;top:108px;" width="16" height="16" viewBox="0 0 16 16"><path d="M1.5 15.5L15.5 1.5" stroke="#000"/><circle cx="12" cy="5" r="1.7" fill="#fff" stroke="#2020e0"/><circle cx="14.5" cy="7.8" r="1.5" fill="#fff" stroke="#909090"/></svg>
<svg style="left:758px;top:108px;" width="16" height="16" viewBox="0 0 16 16"><path d="M4 4.5L12.5 12.5M12.5 4.5L4 12.5" stroke="#2a10e0" stroke-width="2.2"/><circle cx="14.5" cy="14.5" r="1.5" fill="#fff" stroke="#000" stroke-width="1.1"/></svg>
<svg style="left:783px;top:121px;" width="5" height="3" viewBox="0 0 5 3"><rect x="0" y="0" width="5" height="1" fill="#000"/><rect x="1" y="1" width="3" height="1" fill="#000"/><rect x="2" y="2" width="1" height="1" fill="#000"/></svg>
<div style="left:795px;top:130px;width:168px;height:1px;background:#b9b9b9"></div>
<div style="left:962px;top:103px;width:1px;height:28px;background:#b9b9b9"></div>
<svg style="left:799px;top:107px;" width="2" height="22" viewBox="0 0 2 22"><rect x="0" y="0" width="2" height="2" fill="#c4c4c4"/><rect x="1" y="1" width="1" height="1" fill="#9a9a9a"/><rect x="0" y="4" width="2" height="2" fill="#c4c4c4"/><rect x="1" y="5" width="1" height="1" fill="#9a9a9a"/><rect x="0" y="8" width="2" height="2" fill="#c4c4c4"/><rect x="1" y="9" width="1" height="1" fill="#9a9a9a"/><rect x="0" y="12" width="2" height="2" fill="#c4c4c4"/><rect x="1" y="13" width="1" height="1" fill="#9a9a9a"/><rect x="0" y="16" width="2" height="2" fill="#c4c4c4"/><rect x="1" y="17" width="1" height="1" fill="#9a9a9a"/><rect x="0" y="20" width="2" height="2" fill="#c4c4c4"/><rect x="1" y="21" width="1" height="1" fill="#9a9a9a"/></svg>
<svg style="left:808px;top:108px;" width="16" height="16" viewBox="0 0 16 16"><circle cx="7" cy="7" r="5.5" fill="#d0e8ff" stroke="#000" stroke-width="1.2"/><path d="M10.5 10.5L14.5 14.5M8 15H15" stroke="#000" stroke-width="1.5"/><rect x="4" y="4" width="6" height="5" fill="none" stroke="#2020c0"/></svg>
<svg style="left:832px;top:108px;" width="16" height="16" viewBox="0 0 16 16"><rect x="0.5" y="0.5" width="15" height="15" fill="#d0e8ff" stroke="#2020c0" stroke-width="1.2"/><circle cx="8" cy="7" r="5" fill="#d0e8ff" stroke="#000" stroke-width="1.2"/><path d="M11 11L14 14" stroke="#000" stroke-width="1.5"/></svg>
<svg style="left:856px;top:108px;" width="16" height="16" viewBox="0 0 16 16"><circle cx="7" cy="7" r="5.5" fill="#d0e8ff" stroke="#000" stroke-width="1.2"/><path d="M10.5 10.5L14.5 14.5M8 15H15" stroke="#000" stroke-width="1.5"/><path d="M12 1V5M10 3H14" stroke="#000" stroke-width="1.2"/></svg>
<svg style="left:880px;top:108px;" width="16" height="16" viewBox="0 0 16 16"><path d="M3 9L2 6L5 7L5 3L7 3L7 6L8 2L10 2L10 6L11 3L13 4L13 11Q12 15 8 15L5 14Z" fill="#f0c8c0" stroke="#000" stroke-width="0.8"/><path d="M12 1L14 3L12 5M13 0V6" stroke="#2020c0" stroke-width="0.8"/></svg>
<svg style="left:904px;top:108px;" width="16" height="16" viewBox="0 0 16 16"><circle cx="7" cy="7" r="5.5" fill="#d0e8ff" stroke="#000" stroke-width="1.2"/><path d="M10.5 10.5L14.5 14.5M8 15H15" stroke="#000" stroke-width="1.5"/><path d="M4 8Q6 3 11 5" fill="none" stroke="#2020c0" stroke-width="1.5"/></svg>
<svg style="left:928px;top:108px;" width="16" height="16" viewBox="0 0 16 16"><circle cx="7" cy="7" r="5.5" fill="#d0e8ff" stroke="#000" stroke-width="1.2"/><path d="M10.5 10.5L14.5 14.5M8 15H15" stroke="#000" stroke-width="1.5"/><path d="M7 3V11M3 7H11" stroke="#2020c0" stroke-width="2.5"/></svg>
<svg style="left:952px;top:121px;" width="5" height="3" viewBox="0 0 5 3"><rect x="0" y="0" width="5" height="1" fill="#000"/><rect x="1" y="1" width="3" height="1" fill="#000"/><rect x="2" y="2" width="1" height="1" fill="#000"/></svg>
<div style="left:0px;top:158px;width:169px;height:1px;background:#b9b9b9"></div>
<div style="left:168px;top:131px;width:1px;height:28px;background:#b9b9b9"></div>
<svg style="left:4px;top:135px;" width="2" height="22" viewBox="0 0 2 22"><rect x="0" y="0" width="2" height="2" fill="#c4c4c4"/><rect x="1" y="1" width="1" height="1" fill="#9a9a9a"/><rect x="0" y="4" width="2" height="2" fill="#c4c4c4"/><rect x="1" y="5" width="1" height="1" fill="#9a9a9a"/><rect x="0" y="8" width="2" height="2" fill="#c4c4c4"/><rect x="1" y="9" width="1" height="1" fill="#9a9a9a"/><rect x="0" y="12" width="2" height="2" fill="#c4c4c4"/><rect x="1" y="13" width="1" height="1" fill="#9a9a9a"/><rect x="0" y="16" width="2" height="2" fill="#c4c4c4"/><rect x="1" y="17" width="1" height="1" fill="#9a9a9a"/><rect x="0" y="20" width="2" height="2" fill="#c4c4c4"/><rect x="1" y="21" width="1" height="1" fill="#9a9a9a"/></svg>
<svg style="left:14px;top:136px;" width="16" height="16" viewBox="0 0 16 16"><rect x="0" y="5" width="6" height="2" fill="#9a9a9a"/><rect x="2" y="3" width="2" height="6" fill="#9a9a9a"/><rect x="8" y="1" width="8" height="4" fill="#9a9a9a"/><rect x="8" y="6" width="8" height="4" fill="#9a9a9a"/><rect x="0" y="12" width="10" height="4" fill="#9a9a9a"/></svg>
<svg style="left:38px;top:136px;" width="16" height="16" viewBox="0 0 16 16"><rect x="0" y="6" width="7" height="3" fill="#9a9a9a"/><path d="M7 4L10 7.5L7 11Z" fill="#9a9a9a"/><rect x="10" y="1" width="6" height="4" fill="#9a9a9a"/><rect x="10" y="11" width="6" height="4" fill="#9a9a9a"/></svg>
<svg style="left:62px;top:136px;" width="16" height="16" viewBox="0 0 16 16"><rect x="0" y="1" width="8" height="4" fill="#9a9a9a"/><rect x="10" y="2" width="6" height="2" fill="#9a9a9a"/><rect x="0" y="6" width="11" height="3" fill="#9a9a9a"/><path d="M11 4L14 7.5L11 11Z" fill="#9a9a9a"/><rect x="0" y="11" width="8" height="4" fill="#9a9a9a"/></svg>
<svg style="left:86px;top:136px;" width="16" height="16" viewBox="0 0 16 16"><text x="10" y="5.5" font-family="Liberation Mono" font-size="7" text-anchor="middle" fill="#9a9a9a" letter-spacing="0.4">XY</text><rect x="0" y="8" width="6" height="2" fill="#9a9a9a"/><rect x="2" y="6" width="2" height="6" fill="#9a9a9a"/><rect x="7" y="7" width="9" height="4" fill="#9a9a9a"/><rect x="7" y="12" width="9" height="4" fill="#9a9a9a"/><rect x="0" y="13" width="6" height="3" fill="#9a9a9a"/></svg>
<svg style="left:110px;top:136px;" width="16" height="16" viewBox="0 0 16 16"><text x="10" y="5.5" font-family="Liberation Mono" font-size="7" text-anchor="middle" fill="#9a9a9a" letter-spacing="0.4">XY</text><rect x="0" y="9" width="5" height="3" fill="#9a9a9a"/><path d="M5 7L8 10.5L5 14Z" fill="#9a9a9a"/><rect x="10" y="7" width="6" height="4" fill="#9a9a9a"/><rect x="10" y="12" width="6" height="4" fill="#9a9a9a"/></svg>
<svg style="left:134px;top:136px;" width="16" height="16" viewBox="0 0 16 16"><text x="10" y="5.5" font-family="Liberation Mono" font-size="7" text-anchor="middle" fill="#9a9a9a" letter-spacing="0.4">REF</text><rect x="0" y="8" width="6" height="2" fill="#9a9a9a"/><rect x="2" y="6" width="2" height="6" fill="#9a9a9a"/><rect x="7" y="7" width="9" height="4" fill="#9a9a9a"/><rect x="7" y="12" width="9" height="4" fill="#9a9a9a"/><rect x="0" y="13" width="6" height="3" fill="#9a9a9a"/></svg>
<svg style="left:157px;top:149px;" width="5" height="3" viewBox="0 0 5 3"><rect x="0" y="0" width="5" height="1" fill="#000"/><rect x="1" y="1" width="3" height="1" fill="#000"/><rect x="2" y="2" width="1" height="1" fill="#000"/></svg>
<div style="left:169px;top:158px;width:593px;height:1px;background:#b9b9b9"></div>
<div style="left:761px;top:131px;width:1px;height:28px;background:#b9b9b9"></div>
<svg style="left:173px;top:135px;" width="2" height="22" viewBox="0 0 2 22"><rect x="0" y="0" width="2" height="2" fill="#c4c4c4"/><rect x="1" y="1" width="1" height="1" fill="#9a9a9a"/><rect x="0" y="4" width="2" height="2" fill="#c4c4c4"/><rect x="1" y="5" width="1" height="1" fill="#9a9a9a"/><rect x="0" y="8" width="2" height="2" fill="#c4c4c4"/><rect x="1" y="9" width="1" height="1" fill="#9a9a9a"/><rect x="0" y="12" width="2" height="2" fill="#c4c4c4"/><rect x="1" y="13" width="1" height="1" fill="#9a9a9a"/><rect x="0" y="16" width="2" height="2" fill="#c4c4c4"/><rect x="1" y="17" width="1" height="1" fill="#9a9a9a"/><rect x="0" y="20" width="2" height="2" fill="#c4c4c4"/><rect x="1" y="21" width="1" height="1" fill="#9a9a9a"/></svg>
<svg style="left:182px;top:136px;" width="16" height="16" viewBox="0 0 16 16"><path d="M3 3H10L13.5 6.5V15H3Z" fill="#fff" stroke="#2a10e0" stroke-width="1.3"/><circle cx="7" cy="9" r="2.5" fill="none" stroke="#2a10e0" stroke-width="1.1"/><circle cx="9" cy="11" r="2.5" fill="none" stroke="#2a10e0" stroke-width="1.1"/><rect x="0.5" y="0.5" width="4" height="3" fill="#f0e040" stroke="#807000" stroke-width="0.6"/></svg>
<svg style="left:206px;top:136px;" width="16" height="16" viewBox="0 0 16 16"><text x="8" y="6" font-family="Liberation Serif" font-size="6.5" text-anchor="middle" fill="#9a9a9a">123</text><path d="M3 10L7 14L14 6" fill="none" stroke="#9a9a9a" stroke-width="1.5"/></svg>
<svg style="left:230px;top:136px;" width="16" height="16" viewBox="0 0 16 16"><path d="M2 13L9 6M6 13L13 6" stroke="#9a9a9a" stroke-width="1.8"/><path d="M11 3H15V7Z" fill="#9a9a9a"/><path d="M1 15V11L5 15Z" fill="#9a9a9a"/></svg>
<svg style="left:254px;top:136px;" width="16" height="16" viewBox="0 0 16 16"><path d="M4 2V12M1 9L4 13L7 9" fill="none" stroke="#9a9a9a" stroke-width="2"/><path d="M12 14V4M9 7L12 3L15 7" fill="none" stroke="#9a9a9a" stroke-width="2"/></svg>
<div style="left:277px;top:135px;width:1px;height:20px;background:#a0a0a0"></div>
<div style="left:286px;top:135px;width:154px;height:20px;background:#f0f0f0;border:1px solid #f0f0f0;box-sizing:border-box"></div>
<div style="left:426px;top:135px;width:14px;height:20px;background:#cfcfcf;border:1px solid #c6c6c6;box-sizing:border-box"></div>
<svg style="left:428px;top:142px;" width="10" height="6" viewBox="0 0 10 6"><path d="M0.5 0.5L5 5L9.5 0.5" fill="none" stroke="#a8a8a8"/></svg>
<div style="left:445px;top:135px;width:1px;height:20px;background:#a0a0a0"></div>
<div style="left:454px;top:135px;width:154px;height:20px;background:#f0f0f0;border:1px solid #f0f0f0;box-sizing:border-box"></div>
<div style="left:594px;top:135px;width:14px;height:20px;background:#cfcfcf;border:1px solid #c6c6c6;box-sizing:border-box"></div>
<svg style="left:596px;top:142px;" width="10" height="6" viewBox="0 0 10 6"><path d="M0.5 0.5L5 5L9.5 0.5" fill="none" stroke="#a8a8a8"/></svg>
<div style="left:613px;top:135px;width:1px;height:20px;background:#a0a0a0"></div>
<svg style="left:622px;top:136px;" width="16" height="16" viewBox="0 0 16 16"><circle cx="8" cy="8" r="7" fill="#9a9a9a"/><path d="M4 8L7 6M6 10H10M9 8L12 7" stroke="#d8d8d8"/></svg>
<div style="left:645px;top:135px;width:1px;height:20px;background:#a0a0a0"></div>
<svg style="left:654px;top:136px;" width="16" height="16" viewBox="0 0 16 16"><path d="M1 1H15V14L13 15H1Z" fill="#9a9a9a"/></svg>
<svg style="left:679px;top:136px;" width="16" height="16" viewBox="0 0 16 16"><path d="M1 1H15V15L13 13H1Z" fill="#9a9a9a"/></svg>
<svg style="left:702px;top:136px;" width="16" height="16" viewBox="0 0 16 16"><circle cx="7" cy="7" r="5.5" fill="#9a9a9a"/><path d="M10 10L15 15" stroke="#9a9a9a" stroke-width="2.5"/></svg>
<svg style="left:726px;top:136px;" width="16" height="16" viewBox="0 0 16 16"><text x="6" y="12" font-family="Liberation Serif" font-style="italic" font-size="14" text-anchor="middle" fill="#9a9a9a">σ</text><text x="12" y="14" font-family="Liberation Sans" font-size="5" text-anchor="middle" fill="#9a9a9a">XY</text></svg>
<svg style="left:751px;top:149px;" width="5" height="3" viewBox="0 0 5 3"><rect x="0" y="0" width="5" height="1" fill="#000"/><rect x="1" y="1" width="3" height="1" fill="#000"/><rect x="2" y="2" width="1" height="1" fill="#000"/></svg>
<div style="left:762px;top:158px;width:241px;height:1px;background:#b9b9b9"></div>
<div style="left:1002px;top:131px;width:1px;height:28px;background:#b9b9b9"></div>
<svg style="left:766px;top:135px;" width="2" height="22" viewBox="0 0 2 22"><rect x="0" y="0" width="2" height="2" fill="#c4c4c4"/><rect x="1" y="1" width="1" height="1" fill="#9a9a9a"/><rect x="0" y="4" width="2" height="2" fill="#c4c4c4"/><rect x="1" y="5" width="1" height="1" fill="#9a9a9a"/><rect x="0" y="8" width="2" height="2" fill="#c4c4c4"/><rect x="1" y="9" width="1" height="1" fill="#9a9a9a"/><rect x="0" y="12" width="2" height="2" fill="#c4c4c4"/><rect x="1" y="13" width="1" height="1" fill="#9a9a9a"/><rect x="0" y="16" width="2" height="2" fill="#c4c4c4"/><rect x="1" y="17" width="1" height="1" fill="#9a9a9a"/><rect x="0" y="20" width="2" height="2" fill="#c4c4c4"/><rect x="1" y="21" width="1" height="1" fill="#9a9a9a"/></svg>
<svg style="left:775px;top:136px;" width="16" height="16" viewBox="0 0 16 16"><circle cx="8" cy="8" r="6.5" fill="none" stroke="#2020c0" stroke-width="1.2"/><circle cx="8" cy="8" r="1.5" fill="none" stroke="#2020c0"/><circle cx="13" cy="8" r="1" fill="#2020c0"/><circle cx="3" cy="8" r="1" fill="#2020c0"/><circle cx="8" cy="13" r="1" fill="#2020c0"/><circle cx="8" cy="3" r="1" fill="#2020c0"/></svg>
<svg style="left:800px;top:136px;" width="16" height="16" viewBox="0 0 16 16"><circle cx="7" cy="7" r="6" fill="none" stroke="#2020c0" stroke-width="1.2"/><circle cx="7" cy="7" r="1.5" fill="none" stroke="#2020c0"/><path d="M16 16H12L16 12Z" fill="#000"/></svg>
<svg style="left:824px;top:136px;" width="16" height="16" viewBox="0 0 16 16"><rect x="1.5" y="1.5" width="12" height="11" rx="1" fill="#d0e8ff" stroke="#2020c0" stroke-width="1.2"/><path d="M8 12.5V10H13.5" fill="none" stroke="#2020c0"/><path d="M16 16H12L16 12Z" fill="#000"/></svg>
<svg style="left:848px;top:136px;" width="16" height="16" viewBox="0 0 16 16"><rect x="0.5" y="2.5" width="15" height="11" fill="#6090c0" stroke="#a0a0a0"/><path d="M1 9Q5 6 8 9T15 8V13H1Z" fill="#508050"/><rect x="1" y="3" width="14" height="3" fill="#a0c8f0"/></svg>
<svg style="left:872px;top:136px;" width="16" height="16" viewBox="0 0 16 16"><path d="M1 5H15" stroke="#2020c0" stroke-width="1.5"/><path d="M6.5 0.5H9.5L8 3Z" fill="#e0c000"/><circle cx="8" cy="9" r="3.2" fill="#fff8b0" stroke="#807020" stroke-width="0.8"/><rect x="6.5" y="12" width="3" height="3" fill="#909090"/><path d="M16 16H12L16 12Z" fill="#000"/></svg>
<svg style="left:896px;top:136px;" width="16" height="16" viewBox="0 0 16 16"><path d="M2 1V14H15" fill="none" stroke="#2020c0" stroke-width="1.2"/><path d="M3 8H6L9 5L11 8H15" fill="none" stroke="#e02020" stroke-width="1.2"/><path d="M3 11H15" stroke="#2020c0" stroke-width="1.4"/><path d="M4 13H15" stroke="#404040" stroke-dasharray="1 1"/><path d="M16 16H12L16 12Z" fill="#000"/></svg>
<svg style="left:921px;top:136px;" width="16" height="16" viewBox="0 0 16 16"><path d="M5 1V15M11 1V15" stroke="#e02020" stroke-dasharray="1.5 1.5"/><path d="M2 5H14M2 10H14" stroke="#2020c0" stroke-dasharray="2 2"/><path d="M16 16H12L16 12Z" fill="#000"/></svg>
<svg style="left:945px;top:136px;" width="16" height="16" viewBox="0 0 16 16"><path d="M2 1V15M14 1V15" stroke="#2020c0"/><path d="M6 1V15M10 1V15" stroke="#e02020" stroke-dasharray="1.5 1.5"/><path d="M16 16H12L16 12Z" fill="#000"/></svg>
<svg style="left:969px;top:136px;" width="16" height="16" viewBox="0 0 16 16"><path d="M5 1Q11 3 6 7Q2 10 7 13L9 15" fill="none" stroke="#e02020" stroke-width="1.6"/><path d="M16 16H12L16 12Z" fill="#000"/></svg>
<svg style="left:992px;top:149px;" width="5" height="3" viewBox="0 0 5 3"><rect x="0" y="0" width="5" height="1" fill="#000"/><rect x="1" y="1" width="3" height="1" fill="#000"/><rect x="2" y="2" width="1" height="1" fill="#000"/></svg>
<div style="left:1003px;top:158px;width:145px;height:1px;background:#b9b9b9"></div>
<div style="left:1147px;top:131px;width:1px;height:28px;background:#b9b9b9"></div>
<svg style="left:1007px;top:135px;" width="2" height="22" viewBox="0 0 2 22"><rect x="0" y="0" width="2" height="2" fill="#c4c4c4"/><rect x="1" y="1" width="1" height="1" fill="#9a9a9a"/><rect x="0" y="4" width="2" height="2" fill="#c4c4c4"/><rect x="1" y="5" width="1" height="1" fill="#9a9a9a"/><rect x="0" y="8" width="2" height="2" fill="#c4c4c4"/><rect x="1" y="9" width="1" height="1" fill="#9a9a9a"/><rect x="0" y="12" width="2" height="2" fill="#c4c4c4"/><rect x="1" y="13" width="1" height="1" fill="#9a9a9a"/><rect x="0" y="16" width="2" height="2" fill="#c4c4c4"/><rect x="1" y="17" width="1" height="1" fill="#9a9a9a"/><rect x="0" y="20" width="2" height="2" fill="#c4c4c4"/><rect x="1" y="21" width="1" height="1" fill="#9a9a9a"/></svg>
<svg style="left:1017px;top:136px;" width="16" height="16" viewBox="0 0 16 16"><path d="M1 5H15" stroke="#2060c0" stroke-width="2" stroke-dasharray="2 1"/><rect x="1" y="9" width="14" height="3" fill="#f8f090"/><path d="M1 12.5H15" stroke="#2020c0" stroke-width="1.2"/><path d="M2 10V11M4 10V11M6 10V11M8 10V11M10 10V11M12 10V11M14 10V11" stroke="#2020c0" stroke-width="0.8"/></svg>
<svg style="left:1040px;top:136px;" width="16" height="16" viewBox="0 0 16 16"><path d="M1 14Q1 6 8 6Q15 6 15 14Z" fill="#f8f0a0" stroke="#2020c0" stroke-width="1.2"/><path d="M8 14L12 5" stroke="#2020c0"/><circle cx="13" cy="3" r="2" fill="#fff" stroke="#2020c0"/><path d="M6 12H10M8 10V14" stroke="#2020c0"/></svg>
<svg style="left:1064px;top:136px;" width="16" height="16" viewBox="0 0 16 16"><path d="M4 11V6L11 2L14 3V9L12 11Z" fill="#c88a5a"/><path d="M4 6L11 2L14 3L6 7Z" fill="#30d030"/><path d="M12 4L14 3V9L12 11Z" fill="#d03010"/><rect x="1" y="11.5" width="14" height="3.5" fill="#f8f090" stroke="#000"/><path d="M3 12V13M5 12V13M7 12V13M9 12V13M11 12V13M13 12V13" stroke="#000" stroke-width="0.8"/><text x="2.5" y="5" font-family="Liberation Sans" font-weight="bold" font-size="5.5" text-anchor="middle" fill="#000">1</text></svg>
<svg style="left:1088px;top:136px;" width="16" height="16" viewBox="0 0 16 16"><path d="M4 11V6L11 2L14 3V9L12 11Z" fill="#c88a5a"/><path d="M4 6L11 2L14 3L6 7Z" fill="#30d030"/><path d="M12 4L14 3V9L12 11Z" fill="#d03010"/><rect x="1" y="11.5" width="14" height="3.5" fill="#f8f090" stroke="#000"/><path d="M3 12V13M5 12V13M7 12V13M9 12V13M11 12V13M13 12V13" stroke="#000" stroke-width="0.8"/><text x="2.5" y="5" font-family="Liberation Sans" font-weight="bold" font-size="5.5" text-anchor="middle" fill="#000">2</text></svg>
<svg style="left:1112px;top:136px;" width="16" height="16" viewBox="0 0 16 16"><path d="M4 11V6L11 2L14 3V9L12 11Z" fill="#c88a5a"/><path d="M4 6L11 2L14 3L6 7Z" fill="#30d030"/><path d="M12 4L14 3V9L12 11Z" fill="#d03010"/><rect x="1" y="11.5" width="14" height="3.5" fill="#f8f090" stroke="#000"/><path d="M3 12V13M5 12V13M7 12V13M9 12V13M11 12V13M13 12V13" stroke="#000" stroke-width="0.8"/><text x="2.5" y="5" font-family="Liberation Sans" font-weight="bold" font-size="5.5" text-anchor="middle" fill="#000">3</text></svg>
<svg style="left:1137px;top:149px;" width="5" height="3" viewBox="0 0 5 3"><rect x="0" y="0" width="5" height="1" fill="#000"/><rect x="1" y="1" width="3" height="1" fill="#000"/><rect x="2" y="2" width="1" height="1" fill="#000"/></svg>
<div style="left:0px;top:186px;width:169px;height:1px;background:#b9b9b9"></div>
<div style="left:168px;top:159px;width:1px;height:28px;background:#b9b9b9"></div>
<svg style="left:4px;top:163px;" width="2" height="22" viewBox="0 0 2 22"><rect x="0" y="0" width="2" height="2" fill="#c4c4c4"/><rect x="1" y="1" width="1" height="1" fill="#9a9a9a"/><rect x="0" y="4" width="2" height="2" fill="#c4c4c4"/><rect x="1" y="5" width="1" height="1" fill="#9a9a9a"/><rect x="0" y="8" width="2" height="2" fill="#c4c4c4"/><rect x="1" y="9" width="1" height="1" fill="#9a9a9a"/><rect x="0" y="12" width="2" height="2" fill="#c4c4c4"/><rect x="1" y="13" width="1" height="1" fill="#9a9a9a"/><rect x="0" y="16" width="2" height="2" fill="#c4c4c4"/><rect x="1" y="17" width="1" height="1" fill="#9a9a9a"/><rect x="0" y="20" width="2" height="2" fill="#c4c4c4"/><rect x="1" y="21" width="1" height="1" fill="#9a9a9a"/></svg>
<svg style="left:14px;top:164px;" width="16" height="16" viewBox="0 0 16 16"><path d="M1 1H16L1 15Z" fill="#9a9a9a"/><path d="M11 11L14 14" stroke="#9a9a9a" stroke-width="1.3"/><rect x="10" y="10" width="2" height="2" fill="#9a9a9a"/></svg>
<svg style="left:38px;top:164px;" width="16" height="16" viewBox="0 0 16 16"><path d="M1 3H9M1 6H8M1 9H6M1 15L14 1M10 5V15M14 1V15M5 15V11" stroke="#9a9a9a" stroke-width="1.1"/></svg>
<svg style="left:62px;top:164px;" width="16" height="16" viewBox="0 0 16 16"><rect x="1" y="1" width="14" height="14" fill="#9a9a9a"/></svg>
<svg style="left:86px;top:164px;" width="16" height="16" viewBox="0 0 16 16"><path d="M3.5 5L6 7.5L3.5 10L1 7.5Z" fill="#9a9a9a"/><text x="9.5" y="6" font-family="Liberation Sans" font-size="6" text-anchor="middle" fill="#9a9a9a">z</text><circle cx="11" cy="11.5" r="3.5" fill="#9a9a9a"/></svg>
<svg style="left:110px;top:164px;" width="16" height="16" viewBox="0 0 16 16"><path d="M3.5 5L6 7.5L3.5 10L1 7.5Z" fill="#9a9a9a"/><text x="9.5" y="6" font-family="Liberation Sans" font-size="6" text-anchor="middle" fill="#9a9a9a">z</text><path d="M11 8V16M7 12H15" stroke="#9a9a9a" stroke-width="3.2"/></svg>
<svg style="left:134px;top:164px;" width="16" height="16" viewBox="0 0 16 16"><path d="M3.5 5L6 7.5L3.5 10L1 7.5Z" fill="#9a9a9a"/><text x="9.5" y="6" font-family="Liberation Sans" font-size="6" text-anchor="middle" fill="#9a9a9a">z</text><rect x="8" y="10" width="7" height="4" fill="#9a9a9a"/></svg>
<svg style="left:157px;top:177px;" width="5" height="3" viewBox="0 0 5 3"><rect x="0" y="0" width="5" height="1" fill="#000"/><rect x="1" y="1" width="3" height="1" fill="#000"/><rect x="2" y="2" width="1" height="1" fill="#000"/></svg>
<div style="left:169px;top:186px;width:201px;height:1px;background:#b9b9b9"></div>
<div style="left:369px;top:159px;width:1px;height:28px;background:#b9b9b9"></div>
<svg style="left:173px;top:163px;" width="2" height="22" viewBox="0 0 2 22"><rect x="0" y="0" width="2" height="2" fill="#c4c4c4"/><rect x="1" y="1" width="1" height="1" fill="#9a9a9a"/><rect x="0" y="4" width="2" height="2" fill="#c4c4c4"/><rect x="1" y="5" width="1" height="1" fill="#9a9a9a"/><rect x="0" y="8" width="2" height="2" fill="#c4c4c4"/><rect x="1" y="9" width="1" height="1" fill="#9a9a9a"/><rect x="0" y="12" width="2" height="2" fill="#c4c4c4"/><rect x="1" y="13" width="1" height="1" fill="#9a9a9a"/><rect x="0" y="16" width="2" height="2" fill="#c4c4c4"/><rect x="1" y="17" width="1" height="1" fill="#9a9a9a"/><rect x="0" y="20" width="2" height="2" fill="#c4c4c4"/><rect x="1" y="21" width="1" height="1" fill="#9a9a9a"/></svg>
<svg style="left:183px;top:164px;" width="16" height="16" viewBox="0 0 16 16"><path d="M1.5 11V6Q8 1 14.5 6V11Z" fill="#d8ecff" stroke="#000"/><path d="M2 6L4 4.5M14 6L12 4.5M8 2V3.5" stroke="#f0e000" stroke-width="2"/><path d="M6 9L10 5M8 5H10V7" fill="none" stroke="#2020c0" stroke-width="1.2"/><g shape-rendering="crispEdges"><rect x="0" y="12" width="16" height="4" fill="#000"/><rect x="1" y="13" width="14" height="1" fill="#a8d0f8"/><rect x="2" y="13" width="1" height="1" fill="#2020e0"/><rect x="5" y="13" width="1" height="1" fill="#2020e0"/><rect x="8" y="13" width="1" height="1" fill="#2020e0"/><rect x="11" y="13" width="1" height="1" fill="#2020e0"/><rect x="14" y="13" width="1" height="1" fill="#2020e0"/></g></svg>
<svg style="left:207px;top:164px;" width="16" height="16" viewBox="0 0 16 16"><path d="M1.5 11V6Q8 1 14.5 6V11Z" fill="#d8ecff" stroke="#000"/><path d="M8 10V5M6 7L8 5L10 7" fill="none" stroke="#2020c0" stroke-width="1.4"/><g shape-rendering="crispEdges"><rect x="0" y="12" width="16" height="4" fill="#000"/><rect x="1" y="13" width="14" height="1" fill="#a8d0f8"/><rect x="2" y="13" width="1" height="1" fill="#2020e0"/><rect x="5" y="13" width="1" height="1" fill="#2020e0"/><rect x="8" y="13" width="1" height="1" fill="#2020e0"/><rect x="11" y="13" width="1" height="1" fill="#2020e0"/><rect x="14" y="13" width="1" height="1" fill="#2020e0"/></g></svg>
<svg style="left:231px;top:164px;" width="16" height="16" viewBox="0 0 16 16"><path d="M1 11V8L9 5L15 2V11Z" fill="#2a1ad0" stroke="#000" stroke-width="0.8"/><g shape-rendering="crispEdges"><rect x="0" y="12" width="16" height="4" fill="#000"/><rect x="1" y="13" width="14" height="1" fill="#a8d0f8"/><rect x="2" y="13" width="1" height="1" fill="#2020e0"/><rect x="5" y="13" width="1" height="1" fill="#2020e0"/><rect x="8" y="13" width="1" height="1" fill="#2020e0"/><rect x="11" y="13" width="1" height="1" fill="#2020e0"/><rect x="14" y="13" width="1" height="1" fill="#2020e0"/></g></svg>
<svg style="left:255px;top:164px;" width="16" height="16" viewBox="0 0 16 16"><rect x="0" y="0" width="16" height="16" fill="#10a010"/><path d="M4 2H9L13 7V12L9 15L4 12Z" fill="#d0e8ff" stroke="#2020c0" stroke-width="1.2"/></svg>
<svg style="left:280px;top:164px;" width="16" height="16" viewBox="0 0 16 16"><g shape-rendering="crispEdges"><path d="M2 1H9L13 5V14H2Z" fill="#d8f0ff" stroke="#2a10e0" stroke-width="1.5"/><path d="M3 8H9M3 10H8M3 12.5H12M6 10V14M9.5 12V14" stroke="#fff" stroke-width="1"/></g><path d="M3 6L11 11" stroke="#2a10e0" stroke-width="1.2"/></svg>
<svg style="left:303px;top:164px;" width="16" height="16" viewBox="0 0 16 16"><path d="M4 2H10.5V6L14.5 10L10 14.5L5.5 10L3 8Z" fill="#d8f0ff" stroke="#2a10e0" stroke-width="1.2"/><path d="M2 3.5L14 14.5M14 3.5L2 14.5" stroke="#a01010" stroke-width="1" stroke-dasharray="1.2 0.6"/><rect x="7" y="8" width="2" height="2" fill="#a01010"/></svg>
<div style="left:325px;top:163px;width:1px;height:20px;background:#a0a0a0"></div>
<svg style="left:335px;top:164px;" width="16" height="16" viewBox="0 0 16 16"><g shape-rendering="crispEdges"><rect x="0.5" y="1.5" width="15" height="13" fill="#fff" stroke="#2020c0"/><rect x="1" y="2" width="14" height="2" fill="#2020c0"/><rect x="3" y="6" width="10" height="1" fill="#b01010"/><rect x="3" y="8" width="10" height="1" fill="#b01010"/><rect x="3" y="10" width="10" height="1" fill="#b01010"/><rect x="3" y="12" width="10" height="1" fill="#b01010"/></g></svg>
<svg style="left:360px;top:177px;" width="5" height="3" viewBox="0 0 5 3"><rect x="0" y="0" width="5" height="1" fill="#000"/><rect x="1" y="1" width="3" height="1" fill="#000"/><rect x="2" y="2" width="1" height="1" fill="#000"/></svg>
<div style="left:370px;top:186px;width:450px;height:1px;background:#b9b9b9"></div>
<div style="left:819px;top:159px;width:1px;height:28px;background:#b9b9b9"></div>
<svg style="left:374px;top:163px;" width="2" height="22" viewBox="0 0 2 22"><rect x="0" y="0" width="2" height="2" fill="#c4c4c4"/><rect x="1" y="1" width="1" height="1" fill="#9a9a9a"/><rect x="0" y="4" width="2" height="2" fill="#c4c4c4"/><rect x="1" y="5" width="1" height="1" fill="#9a9a9a"/><rect x="0" y="8" width="2" height="2" fill="#c4c4c4"/><rect x="1" y="9" width="1" height="1" fill="#9a9a9a"/><rect x="0" y="12" width="2" height="2" fill="#c4c4c4"/><rect x="1" y="13" width="1" height="1" fill="#9a9a9a"/><rect x="0" y="16" width="2" height="2" fill="#c4c4c4"/><rect x="1" y="17" width="1" height="1" fill="#9a9a9a"/><rect x="0" y="20" width="2" height="2" fill="#c4c4c4"/><rect x="1" y="21" width="1" height="1" fill="#9a9a9a"/></svg>
<svg style="left:384px;top:164px;" width="16" height="16" viewBox="0 0 16 16"><text x="8" y="8" font-family="Liberation Sans" font-weight="bold" font-size="7" text-anchor="middle" fill="#000" letter-spacing="-0.3">SHP</text><path d="M5 9H11V11H14L8 16L2 11H5Z" fill="#10900f"/></svg>
<svg style="left:408px;top:164px;" width="16" height="16" viewBox="0 0 16 16"><text x="8" y="8" font-family="Liberation Sans" font-weight="bold" font-size="8" text-anchor="middle" fill="#000" letter-spacing="-0.3">PA</text><path d="M5 9H11V11H14L8 16L2 11H5Z" fill="#10900f"/></svg>
<div style="left:430px;top:163px;width:1px;height:20px;background:#a0a0a0"></div>
<svg style="left:440px;top:164px;" width="16" height="16" viewBox="0 0 16 16"><path d="M5 0H11V2H14L8 8L2 2H5Z" fill="#10900f"/><text x="8" y="15" font-family="Liberation Sans" font-weight="bold" font-size="7" text-anchor="middle" fill="#000" letter-spacing="-0.3">SHP</text></svg>
<svg style="left:464px;top:164px;" width="16" height="16" viewBox="0 0 16 16"><path d="M5 0H11V2H14L8 8L2 2H5Z" fill="#10900f"/><text x="8" y="15" font-family="Liberation Sans" font-weight="bold" font-size="8" text-anchor="middle" fill="#000" letter-spacing="-0.3">PA</text></svg>
<div style="left:486px;top:163px;width:1px;height:20px;background:#a0a0a0"></div>
<svg style="left:496px;top:164px;" width="16" height="16" viewBox="0 0 16 16"><path d="M1.5 15.5V1.5H7.5L1.5 15.5M4 15.5L11 1.5H15.5V15.5Z" fill="none" stroke="#10900f" stroke-width="1.1"/></svg>
<svg style="left:519px;top:164px;" width="16" height="16" viewBox="0 0 16 16"><path d="M1.5 15.5V1.5H7.5L1.5 15.5M4 15.5L11 1.5H15.5V15.5Z" fill="none" stroke="#10900f" stroke-width="1.1"/><text x="3.8" y="7" font-family="Liberation Sans" font-weight="bold" font-size="6" text-anchor="middle" fill="#000">1</text><text x="12" y="13" font-family="Liberation Sans" font-weight="bold" font-size="6" text-anchor="middle" fill="#000">2</text></svg>
<div style="left:542px;top:163px;width:1px;height:20px;background:#a0a0a0"></div>
<svg style="left:552px;top:164px;" width="16" height="16" viewBox="0 0 16 16"><path d="M1 10L9 2H14.5V7.5L6.5 15.5Z" fill="#f0e040" stroke="#606000" stroke-width="1.1" transform="rotate(0)"/><circle cx="11.5" cy="5" r="1.6" fill="#fff" stroke="#606000" stroke-width="0.8"/><path d="M5 10L8 7M6.5 11.5L9.5 8.5" stroke="#606000" stroke-width="0.8"/></svg>
<svg style="left:576px;top:164px;" width="16" height="16" viewBox="0 0 16 16"><path d="M1 2H13L8 8V14L6 12V8Z" fill="#f0e800" stroke="#a09000" stroke-width="0.6"/><path d="M12 9V16M8.5 12.5H15.5" stroke="#e02020" stroke-width="1.2"/><rect x="11" y="11.5" width="2" height="2" fill="#000"/></svg>
<svg style="left:600px;top:164px;" width="16" height="16" viewBox="0 0 16 16"><path d="M1 2H13L8 8V14L6 12V8Z" fill="#f0e000" stroke="#807000" stroke-width="0.6"/><path d="M9 15L15 8" stroke="#2020c0"/><circle cx="9.5" cy="14.5" r="1" fill="#e02020"/><circle cx="14.5" cy="8.5" r="1" fill="#e02020"/></svg>
<svg style="left:624px;top:164px;" width="16" height="16" viewBox="0 0 16 16"><rect x="1.5" y="1.5" width="13" height="6" fill="#fff" stroke="#a01010"/><path d="M2 7L7 2M6 7L11 2M10 7L14 3" stroke="#108010"/><path d="M1 7.5H15" stroke="#a01010"/><path d="M5 9L10 12L5 15Z" fill="#2040e0"/><path d="M10 9V15" stroke="#2040e0" stroke-width="1.5"/></svg>
<svg style="left:648px;top:164px;" width="16" height="16" viewBox="0 0 16 16"><path d="M1 15L15 1M4 15L15 4M8 15L15 8M12 15L15 12M1 11L11 1M1 7L7 1M1 3L3 1" stroke="#108010" stroke-width="1"/><path d="M15.5 1V15M11.5 5V15M7.5 9V15" stroke="#108010"/></svg>
<svg style="left:672px;top:164px;" width="16" height="16" viewBox="0 0 16 16"><path d="M1 14L14 1M5 15L16 4M9 15L16 8M1 10L10 1" stroke="#30e030" stroke-width="1"/><path d="M3 15L16 2M7 15L16 6M1 12L12 1M1 8L8 1" stroke="#40e8f0" stroke-width="1"/></svg>
<svg style="left:696px;top:164px;" width="16" height="16" viewBox="0 0 16 16"><path d="M2 0.5V3.5M0.5 2H3.5" stroke="#2020ff" stroke-width="1.2"/><path d="M2 4.5V7.5M0.5 6H3.5" stroke="#2020ff" stroke-width="1.2"/><path d="M2 8.5V11.5M0.5 10H3.5" stroke="#2020ff" stroke-width="1.2"/><path d="M2 12.5V15.5M0.5 14H3.5" stroke="#2020ff" stroke-width="1.2"/><path d="M9 0.5V3.5M7.5 2H10.5" stroke="#2020ff" stroke-width="1.2"/><path d="M9 4.5V7.5M7.5 6H10.5" stroke="#2020ff" stroke-width="1.2"/><path d="M9 8.5V11.5M7.5 10H10.5" stroke="#2020ff" stroke-width="1.2"/><path d="M9 12.5V15.5M7.5 14H10.5" stroke="#2020ff" stroke-width="1.2"/><path d="M14.5 0.5V3.5M13.0 2H16.0" stroke="#2020ff" stroke-width="1.2"/><path d="M14.5 4.5V7.5M13.0 6H16.0" stroke="#2020ff" stroke-width="1.2"/><path d="M14.5 8.5V11.5M13.0 10H16.0" stroke="#2020ff" stroke-width="1.2"/><path d="M14.5 12.5V15.5M13.0 14H16.0" stroke="#2020ff" stroke-width="1.2"/></svg>
<div style="left:719px;top:163px;width:1px;height:20px;background:#a0a0a0"></div>
<svg style="left:729px;top:164px;" width="16" height="16" viewBox="0 0 16 16"><path d="M3 3L5 1H15V10H5V15H3Z" fill="#fff" stroke="#9a9a9a"/><path d="M3 3H5V1" fill="none" stroke="#9a9a9a"/><text x="10" y="9" font-family="Liberation Sans" font-size="7" text-anchor="middle" fill="#9a9a9a">Σ</text></svg>
<svg style="left:751px;top:164px;" width="16" height="16" viewBox="0 0 16 16"><rect x="1" y="3" width="14" height="5" rx="1.5" fill="#fff" stroke="#108080" stroke-width="1.5"/></svg>
<div style="left:774px;top:163px;width:1px;height:20px;background:#a0a0a0"></div>
<svg style="left:784px;top:164px;" width="16" height="16" viewBox="0 0 16 16"><path d="M2 8Q2 2 8 3Q13 4 14 7Q10 5 6 6Q3 7 2 8Z" fill="#1a8a8a"/><path d="M14 8Q14 14 8 13Q3 12 2 9Q6 11 10 10Q13 9 14 8Z" fill="#204060"/><path d="M3 8L13 6" stroke="#fff" stroke-width="1.4"/></svg>
<svg style="left:808px;top:177px;" width="5" height="3" viewBox="0 0 5 3"><rect x="0" y="0" width="5" height="1" fill="#000"/><rect x="1" y="1" width="3" height="1" fill="#000"/><rect x="2" y="2" width="1" height="1" fill="#000"/></svg>
<div style="left:0;top:187px;width:200px;height:18px;background:linear-gradient(#bfcfdf,#d4e1ed)"></div>
<span style="left:4px;top:192.27px;font:normal 11.5px/1 'Liberation Sans',sans-serif;color:#000;letter-spacing:-0.148px;">Projetos</span>
<svg style="left:168px;top:193px;" width="8" height="9" viewBox="0 0 8 9"><path d="M2 0H6V5H7.5V6H4.5V9H3.5V6H0.5V5H2Z" fill="#000"/><rect x="3" y="1" width="1" height="4" fill="#fff"/></svg>
<div style="left:184px;top:191px;width:12px;height:12px;background:#c94e4e"></div>
<svg style="left:186px;top:193px;" width="8" height="8" viewBox="0 0 8 8"><path d="M1.5 1.5L6.5 6.5M6.5 1.5L1.5 6.5" stroke="#fff" stroke-width="1.6"/></svg>
<div style="left:0px;top:207px;width:200px;height:502px;border:1px solid #6e6e6e;border-right-color:#a8a8a8;box-sizing:border-box;background:#fff"></div>
<div style="left:1px;top:692px;width:198px;height:15px;background:#f0f0f0"></div>
<div style="left:18px;top:692px;width:157px;height:15px;background:#cdcdcd"></div>
<svg style="left:5px;top:695px;" width="7" height="9" viewBox="0 0 7 9"><path d="M5.5 1L2 4.5L5.5 8" fill="none" stroke="#606060" stroke-width="2"/></svg>
<svg style="left:187px;top:695px;" width="7" height="9" viewBox="0 0 7 9"><path d="M1.5 1L5 4.5L1.5 8" fill="none" stroke="#606060" stroke-width="2"/></svg>
<div style="left:80px;top:406px;width:119px;height:18px;background:#f0f0f0"></div>
<svg style="left:31px;top:225px;" width="1" height="298" viewBox="0 0 1 298"><line x1="0.5" y1="0" x2="0.5" y2="298" stroke="#a0a0a0" stroke-dasharray="1 1"/></svg>
<svg style="left:51px;top:243px;" width="1" height="46" viewBox="0 0 1 46"><line x1="0.5" y1="0" x2="0.5" y2="46" stroke="#a0a0a0" stroke-dasharray="1 1"/></svg>
<svg style="left:51px;top:387px;" width="1" height="28" viewBox="0 0 1 28"><line x1="0.5" y1="0" x2="0.5" y2="28" stroke="#a0a0a0" stroke-dasharray="1 1"/></svg>
<svg style="left:51px;top:441px;" width="1" height="10" viewBox="0 0 1 10"><line x1="0.5" y1="0" x2="0.5" y2="10" stroke="#a0a0a0" stroke-dasharray="1 1"/></svg>
<svg style="left:17px;top:218px;" width="6" height="1" viewBox="0 0 6 1"><line x1="0" y1="0.5" x2="6" y2="0.5" stroke="#a0a0a0" stroke-dasharray="1 1"/></svg>
<div style="left:8px;top:214px;width:9px;height:9px;border:1px solid #a0a0a0;box-sizing:border-box;background:linear-gradient(#fff,#e0e0e0)"></div>
<div style="left:10px;top:218px;width:5px;height:1px;background:#3050a0"></div>
<svg style="left:23px;top:209px;" width="16" height="16" viewBox="0 0 16 16"><rect x="1" y="1" width="14" height="14" fill="#fff" stroke="#14147a" stroke-width="2"/><path d="M6 4H12V10" fill="none" stroke="#8a8a8a" stroke-width="1.2"/><path d="M7.5 6.5L3.5 10.5L6 13L10 9" fill="none" stroke="#9a9a9a" stroke-width="1.2"/></svg>
<span style="left:44px;top:210.84px;font:normal 12px/1 'Liberation Sans',sans-serif;color:#000;">Curtume.geoproject</span>
<svg style="left:32px;top:236px;" width="10" height="1" viewBox="0 0 10 1"><line x1="0" y1="0.5" x2="10" y2="0.5" stroke="#a0a0a0" stroke-dasharray="1 1"/></svg>
<div style="left:27px;top:232px;width:9px;height:9px;border:1px solid #a0a0a0;box-sizing:border-box;background:linear-gradient(#fff,#e0e0e0)"></div>
<div style="left:29px;top:236px;width:5px;height:1px;background:#3050a0"></div>
<svg style="left:42px;top:228px;" width="16" height="16" viewBox="0 0 16 16"><g transform="translate(1,0)"><rect x="0" y="2" width="14" height="12" fill="#2a1ad0"/><rect x="1" y="5" width="12" height="1" fill="#fff"/><rect x="1" y="7" width="12" height="1" fill="#fff"/><rect x="1" y="9" width="12" height="1" fill="#fff"/><rect x="1" y="11" width="12" height="1" fill="#fff"/><rect x="1" y="3" width="1" height="1" fill="#fff"/><rect x="4" y="3" width="1" height="1" fill="#fff"/><rect x="9" y="3" width="1" height="1" fill="#fff"/><rect x="12" y="3" width="1" height="1" fill="#fff"/><rect x="4" y="5" width="1" height="8" fill="#e0e0ff"/><rect x="9" y="5" width="1" height="8" fill="#e0e0ff"/></g></svg>
<span style="left:63px;top:228.84px;font:normal 12px/1 'Liberation Sans',sans-serif;color:#000;">Cadernetas</span>
<svg style="left:52px;top:254px;" width="9" height="1" viewBox="0 0 9 1"><line x1="0" y1="0.5" x2="9" y2="0.5" stroke="#a0a0a0" stroke-dasharray="1 1"/></svg>
<svg style="left:61px;top:246px;" width="16" height="16" viewBox="0 0 16 16"><g transform="translate(1,0)"><rect x="0" y="2" width="14" height="12" fill="#2a1ad0"/><rect x="1" y="5" width="12" height="1" fill="#fff"/><rect x="1" y="7" width="12" height="1" fill="#fff"/><rect x="1" y="9" width="12" height="1" fill="#fff"/><rect x="1" y="11" width="12" height="1" fill="#fff"/><rect x="1" y="3" width="1" height="1" fill="#fff"/><rect x="4" y="3" width="1" height="1" fill="#fff"/><rect x="9" y="3" width="1" height="1" fill="#fff"/><rect x="12" y="3" width="1" height="1" fill="#fff"/><rect x="4" y="5" width="1" height="8" fill="#e0e0ff"/><rect x="9" y="5" width="1" height="8" fill="#e0e0ff"/></g></svg>
<span style="left:82px;top:246.84px;font:normal 12px/1 'Liberation Sans',sans-serif;color:#000;letter-spacing:-0.931px;">CURTUME1</span>
<svg style="left:52px;top:272px;" width="9" height="1" viewBox="0 0 9 1"><line x1="0" y1="0.5" x2="9" y2="0.5" stroke="#a0a0a0" stroke-dasharray="1 1"/></svg>
<svg style="left:61px;top:264px;" width="16" height="16" viewBox="0 0 16 16"><g transform="translate(1,0)"><rect x="0" y="2" width="14" height="12" fill="#2a1ad0"/><rect x="1" y="5" width="12" height="1" fill="#fff"/><rect x="1" y="7" width="12" height="1" fill="#fff"/><rect x="1" y="9" width="12" height="1" fill="#fff"/><rect x="1" y="11" width="12" height="1" fill="#fff"/><rect x="1" y="3" width="1" height="1" fill="#fff"/><rect x="4" y="3" width="1" height="1" fill="#fff"/><rect x="9" y="3" width="1" height="1" fill="#fff"/><rect x="12" y="3" width="1" height="1" fill="#fff"/><rect x="4" y="5" width="1" height="8" fill="#e0e0ff"/><rect x="9" y="5" width="1" height="8" fill="#e0e0ff"/></g></svg>
<span style="left:82px;top:264.84px;font:normal 12px/1 'Liberation Sans',sans-serif;color:#000;letter-spacing:-0.869px;">CURTUME2</span>
<svg style="left:52px;top:290px;" width="9" height="1" viewBox="0 0 9 1"><line x1="0" y1="0.5" x2="9" y2="0.5" stroke="#a0a0a0" stroke-dasharray="1 1"/></svg>
<svg style="left:61px;top:282px;" width="16" height="16" viewBox="0 0 16 16"><g transform="translate(1,0)"><rect x="0" y="2" width="14" height="12" fill="#2a1ad0"/><rect x="1" y="5" width="12" height="1" fill="#fff"/><rect x="1" y="7" width="12" height="1" fill="#fff"/><rect x="1" y="9" width="12" height="1" fill="#fff"/><rect x="1" y="11" width="12" height="1" fill="#fff"/><rect x="1" y="3" width="1" height="1" fill="#fff"/><rect x="4" y="3" width="1" height="1" fill="#fff"/><rect x="9" y="3" width="1" height="1" fill="#fff"/><rect x="12" y="3" width="1" height="1" fill="#fff"/><rect x="4" y="5" width="1" height="8" fill="#e0e0ff"/><rect x="9" y="5" width="1" height="8" fill="#e0e0ff"/></g></svg>
<span style="left:82px;top:282.84px;font:normal 12px/1 'Liberation Sans',sans-serif;color:#000;letter-spacing:-0.869px;">CURTUME3</span>
<svg style="left:32px;top:308px;" width="10" height="1" viewBox="0 0 10 1"><line x1="0" y1="0.5" x2="10" y2="0.5" stroke="#a0a0a0" stroke-dasharray="1 1"/></svg>
<svg style="left:42px;top:300px;" width="16" height="16" viewBox="0 0 16 16"><circle cx="8" cy="8" r="7.2" fill="#2a7ad8"/><path d="M3 4Q6 3 7 6Q5 8 6 11Q4 12 2.5 9Z M9 2Q13 3 14 7Q11 8 10 6Q8 5 9 2Z M10 10Q13 10 12 13Q10 14 9 12Z" fill="#40b040"/></svg>
<span style="left:63px;top:300.84px;font:normal 12px/1 'Liberation Sans',sans-serif;color:#000;">Geodésia</span>
<svg style="left:32px;top:326px;" width="10" height="1" viewBox="0 0 10 1"><line x1="0" y1="0.5" x2="10" y2="0.5" stroke="#a0a0a0" stroke-dasharray="1 1"/></svg>
<svg style="left:42px;top:318px;" width="16" height="16" viewBox="0 0 16 16"><rect x="2" y="5" width="12" height="10" fill="#e04020" stroke="#802010"/><path d="M5 5V2.5H11V5" fill="none" stroke="#802010" stroke-width="1.4"/><rect x="6" y="7" width="4" height="8" fill="#200808"/><rect x="7" y="5.5" width="2" height="2" fill="#fff"/></svg>
<span style="left:63px;top:318.84px;font:normal 12px/1 'Liberation Sans',sans-serif;color:#000;">Locações</span>
<svg style="left:32px;top:344px;" width="10" height="1" viewBox="0 0 10 1"><line x1="0" y1="0.5" x2="10" y2="0.5" stroke="#a0a0a0" stroke-dasharray="1 1"/></svg>
<svg style="left:42px;top:336px;" width="16" height="16" viewBox="0 0 16 16"><circle cx="8" cy="8" r="7" fill="#dcdcdc" stroke="#404040" stroke-width="1.2"/><rect x="7" y="1" width="3" height="14" fill="#c8b060" stroke="#606040" stroke-width="0.6"/><path d="M1 8H15" stroke="#808080"/></svg>
<span style="left:63px;top:336.84px;font:normal 12px/1 'Liberation Sans',sans-serif;color:#000;">Nivelamento</span>
<svg style="left:32px;top:362px;" width="10" height="1" viewBox="0 0 10 1"><line x1="0" y1="0.5" x2="10" y2="0.5" stroke="#a0a0a0" stroke-dasharray="1 1"/></svg>
<svg style="left:42px;top:354px;" width="16" height="16" viewBox="0 0 16 16"><path d="M13.5 1.5L4 6L9 10L2 15.5" fill="none" stroke="#2020e0" stroke-width="1.1"/><path d="M1 5H3M9 1H11M10 10H12M3 15.5H5" stroke="#000" stroke-width="1"/></svg>
<span style="left:63px;top:354.84px;font:normal 12px/1 'Liberation Sans',sans-serif;color:#000;">Poligonais</span>
<svg style="left:32px;top:380px;" width="10" height="1" viewBox="0 0 10 1"><line x1="0" y1="0.5" x2="10" y2="0.5" stroke="#a0a0a0" stroke-dasharray="1 1"/></svg>
<div style="left:27px;top:376px;width:9px;height:9px;border:1px solid #a0a0a0;box-sizing:border-box;background:linear-gradient(#fff,#e0e0e0)"></div>
<div style="left:29px;top:380px;width:5px;height:1px;background:#3050a0"></div>
<svg style="left:42px;top:372px;" width="16" height="16" viewBox="0 0 16 16"><rect x="2" y="3" width="14" height="12" rx="1" fill="#8080a0"/><rect x="0.5" y="1.5" width="14" height="12" rx="1.5" fill="#d8ecff" stroke="#2a1ad0" stroke-width="1.3"/><path d="M3 2V13" stroke="#2a1ad0" stroke-width="1"/><path d="M8 13.5V11H14.5" fill="none" stroke="#2a1ad0" stroke-width="1.2"/></svg>
<span style="left:63px;top:372.84px;font:normal 12px/1 'Liberation Sans',sans-serif;color:#000;">Desenhos</span>
<svg style="left:52px;top:398px;" width="9" height="1" viewBox="0 0 9 1"><line x1="0" y1="0.5" x2="9" y2="0.5" stroke="#a0a0a0" stroke-dasharray="1 1"/></svg>
<svg style="left:61px;top:390px;" width="16" height="16" viewBox="0 0 16 16"><rect x="2" y="3" width="14" height="12" rx="1" fill="#8080a0"/><rect x="0.5" y="1.5" width="14" height="12" rx="1.5" fill="#d8ecff" stroke="#2a1ad0" stroke-width="1.3"/><path d="M3 2V13" stroke="#2a1ad0" stroke-width="1"/><path d="M8 13.5V11H14.5" fill="none" stroke="#2a1ad0" stroke-width="1.2"/></svg>
<span style="left:82px;top:390.84px;font:normal 12px/1 'Liberation Sans',sans-serif;color:#000;">Curtume</span>
<svg style="left:52px;top:416px;" width="9" height="1" viewBox="0 0 9 1"><line x1="0" y1="0.5" x2="9" y2="0.5" stroke="#a0a0a0" stroke-dasharray="1 1"/></svg>
<svg style="left:61px;top:408px;" width="16" height="16" viewBox="0 0 16 16"><rect x="2" y="3" width="14" height="12" rx="1" fill="#8080a0"/><rect x="0.5" y="1.5" width="14" height="12" rx="1.5" fill="#d8ecff" stroke="#2a1ad0" stroke-width="1.3"/><path d="M3 2V13" stroke="#2a1ad0" stroke-width="1"/><path d="M8 13.5V11H14.5" fill="none" stroke="#2a1ad0" stroke-width="1.2"/></svg>
<span style="left:82px;top:408.84px;font:normal 12px/1 'Liberation Sans',sans-serif;color:#000;">Desenho complement</span>
<svg style="left:32px;top:434px;" width="10" height="1" viewBox="0 0 10 1"><line x1="0" y1="0.5" x2="10" y2="0.5" stroke="#a0a0a0" stroke-dasharray="1 1"/></svg>
<div style="left:27px;top:430px;width:9px;height:9px;border:1px solid #a0a0a0;box-sizing:border-box;background:linear-gradient(#fff,#e0e0e0)"></div>
<div style="left:29px;top:434px;width:5px;height:1px;background:#3050a0"></div>
<svg style="left:42px;top:426px;" width="16" height="16" viewBox="0 0 16 16"><path d="M0 8L7 3L16 8L9 14Z" fill="#168a16" stroke="#000" stroke-width="0.9"/><path d="M4 6L9 11M7 3L9 8L13 7" fill="none" stroke="#0a4a0a" stroke-width="0.9"/></svg>
<span style="left:63px;top:426.84px;font:normal 12px/1 'Liberation Sans',sans-serif;color:#000;">Modelo de terreno</span>
<svg style="left:52px;top:452px;" width="9" height="1" viewBox="0 0 9 1"><line x1="0" y1="0.5" x2="9" y2="0.5" stroke="#a0a0a0" stroke-dasharray="1 1"/></svg>
<svg style="left:61px;top:444px;" width="16" height="16" viewBox="0 0 16 16"><path d="M0 8L7 3L16 8L9 14Z" fill="#168a16" stroke="#000" stroke-width="0.9"/><path d="M4 6L9 11M7 3L9 8L13 7" fill="none" stroke="#0a4a0a" stroke-width="0.9"/></svg>
<span style="left:82px;top:444.84px;font:normal 12px/1 'Liberation Sans',sans-serif;color:#000;">Modelo1</span>
<svg style="left:32px;top:470px;" width="10" height="1" viewBox="0 0 10 1"><line x1="0" y1="0.5" x2="10" y2="0.5" stroke="#a0a0a0" stroke-dasharray="1 1"/></svg>
<svg style="left:42px;top:462px;" width="16" height="16" viewBox="0 0 16 16"><path d="M2 1V14H15" fill="none" stroke="#2020c0" stroke-width="1.2"/><path d="M3 8H6L9 5L11 8H15" fill="none" stroke="#e02020" stroke-width="1.2"/><path d="M3 11H15" stroke="#2020c0" stroke-width="1.4"/><path d="M4 13H15" stroke="#404040" stroke-dasharray="1 1"/></svg>
<span style="left:63px;top:462.84px;font:normal 12px/1 'Liberation Sans',sans-serif;color:#000;">Perfis</span>
<svg style="left:32px;top:488px;" width="10" height="1" viewBox="0 0 10 1"><line x1="0" y1="0.5" x2="10" y2="0.5" stroke="#a0a0a0" stroke-dasharray="1 1"/></svg>
<svg style="left:42px;top:480px;" width="16" height="16" viewBox="0 0 16 16"><path d="M1 5H15" stroke="#2020c0" stroke-width="1.5"/><path d="M6.5 0.5H9.5L8 3Z" fill="#e0c000"/><circle cx="8" cy="9" r="3.6" fill="#ffee40" stroke="#806000" stroke-width="0.8"/><rect x="6.5" y="12" width="3" height="3" fill="#808080"/></svg>
<span style="left:63px;top:480.84px;font:normal 12px/1 'Liberation Sans',sans-serif;color:#000;">Reconstituição</span>
<svg style="left:32px;top:506px;" width="10" height="1" viewBox="0 0 10 1"><line x1="0" y1="0.5" x2="10" y2="0.5" stroke="#a0a0a0" stroke-dasharray="1 1"/></svg>
<svg style="left:42px;top:498px;" width="16" height="16" viewBox="0 0 16 16"><path d="M1 7L8 2L15 7L15 10L8 15L1 10Z" fill="#404040"/><path d="M1 7L8 2L15 7L8 12Z" fill="#30e030" stroke="#106010"/><path d="M5 5L9 9M8 2L10 7L13 6" fill="none" stroke="#108010"/></svg>
<span style="left:63px;top:498.84px;font:normal 12px/1 'Liberation Sans',sans-serif;color:#000;">Modelo 3D</span>
<svg style="left:32px;top:524px;" width="10" height="1" viewBox="0 0 10 1"><line x1="0" y1="0.5" x2="10" y2="0.5" stroke="#a0a0a0" stroke-dasharray="1 1"/></svg>
<svg style="left:42px;top:516px;" width="16" height="16" viewBox="0 0 16 16"><rect x="3" y="2" width="12" height="14" fill="#8aa0d0"/><rect x="1.5" y="0.5" width="11" height="14" fill="#fff" stroke="#2a5ac8" stroke-width="1.2"/><path d="M3.5 4H10.5M3.5 6.5H10.5M3.5 9H10.5M3.5 11.5H10.5" stroke="#2a5ac8"/></svg>
<span style="left:63px;top:516.84px;font:normal 12px/1 'Liberation Sans',sans-serif;color:#000;">Relatórios</span>
<div style="left:204px;top:187px;width:1132px;height:412px;background:#000;border-left:2px solid #8a8a8a;border-top:2px solid #8a8a8a;box-sizing:border-box"></div>
<svg style="left:206px;top:189px;overflow:hidden" width="1130" height="410" viewBox="0 0 1130 410"><g transform="translate(-206,-189)"><polyline points="567,262 644,224.4 714,273 830,329.5 868,347.5 898.5,368 902,371 904,383 936,393.7 962.7,402.5" fill="none" stroke="#ff0000" stroke-width="1.25" stroke-linejoin="round"/><polyline points="904,383.5 877,393 839,412.7 835,414.3 815.5,415 815.5,416 805,416.2" fill="none" stroke="#ff0000" stroke-width="1.25" stroke-linejoin="round"/><polyline points="575,250 627.2,208.2" fill="none" stroke="#00ff00" stroke-width="1.1" stroke-linejoin="round"/><polyline points="575,251.5 633.4,213.9 627.5,208" fill="none" stroke="#00ffff" stroke-width="1.1" stroke-linejoin="round"/><polyline points="629,204 631,206.5 638,211 640,212 644,210 645,209" fill="none" stroke="#00ffff" stroke-width="1.1" stroke-linejoin="round"/><rect x="631" y="211" width="3" height="3" fill="#00ffff"/><path d="M634 213L638 216H633Z" fill="#00ff00"/><polyline points="957,360 950,381 950,452.3 950.5,467.5" fill="none" stroke="#00ffff" stroke-width="1.1" stroke-linejoin="round"/><polyline points="950,382 963,394 972.5,404.5" fill="none" stroke="#00ffff" stroke-width="1.0" stroke-linejoin="round"/><polyline points="950,385.5 961,396 970,406" fill="none" stroke="#00ffff" stroke-width="1.0" stroke-linejoin="round"/><polyline points="777.1,364.7 785.9,361.9 794.7,365 806.7,371.8 812.2,376.7 813.3,387.1 815.5,387" fill="none" stroke="#00ffff" stroke-width="1.1" stroke-linejoin="round"/><polyline points="771.7,417.1 781,412.1 789.7,412.5 792.5,416 781.5,417.6 774.4,422.5 771.7,417.1" fill="none" stroke="#ffff00" stroke-width="1.3" stroke-linejoin="round"/><polyline points="780.4,390.4 784.8,387.1 787.5,393.7 782.6,394.8 780.4,390.4" fill="none" stroke="#ffff00" stroke-width="1.3" stroke-linejoin="round"/><polyline points="784.8,395.5 789.7,392 790.3,399.2 785.9,400.8 784.8,395.5" fill="none" stroke="#ffff00" stroke-width="1.3" stroke-linejoin="round"/><polyline points="829.5,406 832,404.5 835,409 832.5,410.5 829.5,406" fill="none" stroke="#ffff00" stroke-width="1.3" stroke-linejoin="round"/><rect x="740" y="349" width="4" height="4" fill="none" stroke="#ffff00" stroke-width="1"/><rect x="769" y="367" width="5" height="4" fill="none" stroke="#ffff00" stroke-width="1"/><rect x="759" y="386" width="3" height="3" fill="#ffff00"/><rect x="797" y="413" width="3" height="3" fill="#ffff00"/><polyline points="774.4,571.3 780,558 787,547 790,556 792,568 774.4,571.3" fill="none" stroke="#00c000" stroke-width="1.1" stroke-linejoin="round"/><ellipse cx="776" cy="394.3" rx="2.6" ry="4.2" transform="rotate(-20 776 394.3)" fill="none" stroke="#0000ff" stroke-width="1.1"/><path d="M778.5 437.5L783 437.5L784 441L781 443L778 441Z" fill="none" stroke="#b09060" stroke-width="1"/><rect x="774" y="195" width="2" height="34" fill="#e6e6e6"/><rect x="774" y="240" width="2" height="35" fill="#e6e6e6"/><rect x="736" y="233" width="34" height="2" fill="#e6e6e6"/><rect x="781" y="233" width="35" height="2" fill="#e6e6e6"/><rect x="771" y="230" width="9" height="9" fill="none" stroke="#e6e6e6" stroke-width="1.6"/><path d="M775.5 232V237M773 234.5H778" stroke="#e6e6e6"/><rect x="625" y="205" width="2" height="2" fill="#fff"/><rect x="646" y="210" width="2" height="2" fill="#fff"/><rect x="646" y="221" width="2" height="2" fill="#fff"/><rect x="660" y="215" width="2" height="2" fill="#fff"/><rect x="658" y="218" width="2" height="2" fill="#fff"/><rect x="670" y="222" width="2" height="2" fill="#fff"/><rect x="694" y="239" width="2" height="2" fill="#fff"/><rect x="692" y="242" width="2" height="2" fill="#fff"/><rect x="628" y="231" width="2" height="2" fill="#fff"/><rect x="604" y="242" width="2" height="2" fill="#fff"/><rect x="574" y="253" width="2" height="2" fill="#fff"/><rect x="584" y="254" width="2" height="2" fill="#fff"/><rect x="566" y="261" width="2" height="2" fill="#fff"/><rect x="666" y="239" width="2" height="2" fill="#fff"/><rect x="719" y="256" width="2" height="2" fill="#fff"/><rect x="730" y="266" width="2" height="2" fill="#fff"/><rect x="741" y="269" width="2" height="2" fill="#fff"/><rect x="742" y="272" width="2" height="2" fill="#fff"/><rect x="751" y="278" width="2" height="2" fill="#fff"/><rect x="764" y="276" width="2" height="2" fill="#fff"/><rect x="764" y="283" width="2" height="2" fill="#fff"/><rect x="780" y="280" width="2" height="2" fill="#fff"/><rect x="788" y="277" width="2" height="2" fill="#fff"/><rect x="805" y="280" width="2" height="2" fill="#fff"/><rect x="816" y="277" width="2" height="2" fill="#fff"/><rect x="691" y="286" width="2" height="2" fill="#fff"/><rect x="756" y="292" width="2" height="2" fill="#fff"/><rect x="735" y="322" width="2" height="2" fill="#fff"/><rect x="831" y="284" width="2" height="2" fill="#fff"/><rect x="841" y="281" width="2" height="2" fill="#fff"/><rect x="852" y="287" width="2" height="2" fill="#fff"/><rect x="850" y="292" width="2" height="2" fill="#fff"/><rect x="862" y="293" width="2" height="2" fill="#fff"/><rect x="875" y="309" width="2" height="2" fill="#fff"/><rect x="880" y="309" width="2" height="2" fill="#fff"/><rect x="867" y="318" width="2" height="2" fill="#fff"/><rect x="880" y="316" width="2" height="2" fill="#fff"/><rect x="892" y="321" width="2" height="2" fill="#fff"/><rect x="898" y="327" width="2" height="2" fill="#fff"/><rect x="916" y="345" width="2" height="2" fill="#fff"/><rect x="933" y="361" width="2" height="2" fill="#fff"/><rect x="933" y="373" width="2" height="2" fill="#fff"/><rect x="901" y="369" width="2" height="2" fill="#fff"/><rect x="867" y="346" width="2" height="2" fill="#fff"/><rect x="874" y="391" width="2" height="2" fill="#fff"/><rect x="935" y="392" width="2" height="2" fill="#fff"/><rect x="903" y="382" width="2" height="2" fill="#fff"/><rect x="617" y="361" width="2" height="2" fill="#fff"/><rect x="701" y="347" width="2" height="2" fill="#fff"/><rect x="704" y="356" width="2" height="2" fill="#fff"/><rect x="770" y="363" width="2" height="2" fill="#fff"/><rect x="742" y="389" width="2" height="2" fill="#fff"/><rect x="755" y="389" width="2" height="2" fill="#fff"/><rect x="769" y="414" width="2" height="2" fill="#fff"/><rect x="762" y="420" width="2" height="2" fill="#fff"/><rect x="782" y="415" width="2" height="2" fill="#fff"/><rect x="803" y="398" width="2" height="2" fill="#fff"/><rect x="809" y="401" width="2" height="2" fill="#fff"/><rect x="785" y="398" width="2" height="2" fill="#fff"/><rect x="779" y="379" width="2" height="2" fill="#fff"/><rect x="659" y="469" width="2" height="2" fill="#fff"/><rect x="860" y="475" width="2" height="2" fill="#fff"/><rect x="929" y="488" width="2" height="2" fill="#fff"/><rect x="917" y="495" width="2" height="2" fill="#fff"/><rect x="865" y="522" width="2" height="2" fill="#fff"/><rect x="875" y="554" width="2" height="2" fill="#fff"/><rect x="771" y="572" width="2" height="2" fill="#fff"/><rect x="792" y="567" width="2" height="2" fill="#fff"/><rect x="705" y="582" width="2" height="2" fill="#fff"/><rect x="821" y="348" width="2" height="2" fill="#fff"/><rect x="804" y="415" width="2" height="2" fill="#fff"/><rect x="716.5" y="258" width="3" height="2" fill="#00ff00"/><rect x="723.5" y="266" width="3" height="2" fill="#00ff00"/><rect x="738.5" y="273" width="3" height="2" fill="#00ff00"/><rect x="790.5" y="277" width="3" height="2" fill="#00ff00"/><rect x="791.5" y="282" width="3" height="2" fill="#00ff00"/><rect x="795.5" y="282" width="3" height="2" fill="#00ff00"/><rect x="808.5" y="282" width="3" height="2" fill="#00ff00"/><rect x="739.5" y="308" width="3" height="2" fill="#00ff00"/><rect x="733.5" y="326" width="3" height="2" fill="#00ff00"/><rect x="701.5" y="348" width="3" height="2" fill="#00ff00"/><rect x="841.5" y="281" width="3" height="2" fill="#00ff00"/><rect x="841.5" y="288" width="3" height="2" fill="#00ff00"/><rect x="860.5" y="299" width="3" height="2" fill="#00ff00"/><rect x="867.5" y="300" width="3" height="2" fill="#00ff00"/><rect x="867.5" y="303" width="3" height="2" fill="#00ff00"/><rect x="878.5" y="307" width="3" height="2" fill="#00ff00"/><rect x="876.5" y="318" width="3" height="2" fill="#00ff00"/><rect x="858.5" y="321" width="3" height="2" fill="#00ff00"/><rect x="858.5" y="324" width="3" height="2" fill="#00ff00"/><rect x="843.5" y="331" width="3" height="2" fill="#00ff00"/><rect x="875.5" y="331" width="3" height="2" fill="#00ff00"/><rect x="871.5" y="347" width="3" height="2" fill="#00ff00"/><rect x="831.5" y="341" width="3" height="2" fill="#00ff00"/><rect x="940.5" y="368" width="3" height="2" fill="#00ff00"/><rect x="936.5" y="375" width="3" height="2" fill="#00ff00"/><rect x="883.5" y="394" width="3" height="2" fill="#00ff00"/><rect x="742.5" y="352" width="3" height="2" fill="#00ff00"/><rect x="773.5" y="368" width="3" height="2" fill="#00ff00"/><rect x="776.5" y="364" width="3" height="2" fill="#00ff00"/><rect x="794.5" y="365" width="3" height="2" fill="#00ff00"/><rect x="805.5" y="370" width="3" height="2" fill="#00ff00"/><rect x="812.5" y="376" width="3" height="2" fill="#00ff00"/><rect x="817.5" y="387" width="3" height="2" fill="#00ff00"/><rect x="784.5" y="387" width="3" height="2" fill="#00ff00"/><rect x="787.5" y="392" width="3" height="2" fill="#00ff00"/><rect x="784.5" y="396" width="3" height="2" fill="#00ff00"/><rect x="790.5" y="397" width="3" height="2" fill="#00ff00"/><rect x="794.5" y="400" width="3" height="2" fill="#00ff00"/><rect x="801.5" y="399" width="3" height="2" fill="#00ff00"/><rect x="808.5" y="399" width="3" height="2" fill="#00ff00"/><rect x="815.5" y="354" width="3" height="2" fill="#00ff00"/><rect x="829.5" y="343" width="3" height="2" fill="#00ff00"/><rect x="832.5" y="409" width="3" height="2" fill="#00ff00"/><rect x="832.5" y="416" width="3" height="2" fill="#00ff00"/><rect x="833.5" y="419" width="3" height="2" fill="#00ff00"/><rect x="779.5" y="424" width="3" height="2" fill="#00ff00"/><rect x="787.5" y="423" width="3" height="2" fill="#00ff00"/><rect x="779.5" y="429" width="3" height="2" fill="#00ff00"/><rect x="797.5" y="431" width="3" height="2" fill="#00ff00"/><rect x="805.5" y="425" width="3" height="2" fill="#00ff00"/><rect x="818.5" y="426" width="3" height="2" fill="#00ff00"/><rect x="772.5" y="436" width="3" height="2" fill="#00ff00"/><rect x="771.5" y="440" width="3" height="2" fill="#00ff00"/><rect x="783.5" y="440" width="3" height="2" fill="#00ff00"/><rect x="803.5" y="435" width="3" height="2" fill="#00ff00"/><rect x="804.5" y="439" width="3" height="2" fill="#00ff00"/><rect x="798.5" y="441" width="3" height="2" fill="#00ff00"/><rect x="814.5" y="436" width="3" height="2" fill="#00ff00"/><rect x="821.5" y="437" width="3" height="2" fill="#00ff00"/><rect x="818.5" y="440" width="3" height="2" fill="#00ff00"/><rect x="812.5" y="441" width="3" height="2" fill="#00ff00"/><rect x="822.5" y="445" width="3" height="2" fill="#00ff00"/><rect x="824.5" y="449" width="3" height="2" fill="#00ff00"/><rect x="832.5" y="449" width="3" height="2" fill="#00ff00"/><rect x="846.5" y="448" width="3" height="2" fill="#00ff00"/><rect x="776.5" y="447" width="3" height="2" fill="#00ff00"/><rect x="774.5" y="450" width="3" height="2" fill="#00ff00"/><rect x="819.5" y="460" width="3" height="2" fill="#00ff00"/><rect x="762.5" y="423" width="3" height="2" fill="#00ff00"/><rect x="800.5" y="413" width="3" height="2" fill="#00ff00"/><rect x="788.5" y="413" width="3" height="2" fill="#00ff00"/><rect x="898.5" y="447" width="3" height="2" fill="#00ff00"/><rect x="950.5" y="466" width="3" height="2" fill="#00ff00"/><rect x="932.5" y="475" width="3" height="2" fill="#00ff00"/><rect x="932.5" y="481" width="3" height="2" fill="#00ff00"/><rect x="930.5" y="486" width="3" height="2" fill="#00ff00"/><rect x="920.5" y="493" width="3" height="2" fill="#00ff00"/><rect x="924.5" y="493" width="3" height="2" fill="#00ff00"/><rect x="925.5" y="495" width="3" height="2" fill="#00ff00"/><rect x="912.5" y="496" width="3" height="2" fill="#00ff00"/><rect x="921.5" y="498" width="3" height="2" fill="#00ff00"/><rect x="903.5" y="498" width="3" height="2" fill="#00ff00"/><rect x="907.5" y="513" width="3" height="2" fill="#00ff00"/><rect x="892.5" y="530" width="3" height="2" fill="#00ff00"/><rect x="882.5" y="542" width="3" height="2" fill="#00ff00"/><rect x="878.5" y="547" width="3" height="2" fill="#00ff00"/><rect x="874.5" y="560" width="3" height="2" fill="#00ff00"/><rect x="850.5" y="563" width="3" height="2" fill="#00ff00"/><rect x="856.5" y="563" width="3" height="2" fill="#00ff00"/><rect x="948.5" y="491" width="3" height="2" fill="#00ff00"/><rect x="956.5" y="387" width="3" height="2" fill="#00ff00"/><rect x="956.5" y="358" width="3" height="2" fill="#00ff00"/><rect x="616.5" y="362" width="3" height="2" fill="#00ff00"/><rect x="659.5" y="469" width="3" height="2" fill="#00ff00"/><rect x="629.5" y="215" width="3" height="2" fill="#00ff00"/></g></svg>
<div style="left:204px;top:599px;width:1132px;height:18px;background:#f0f0f0;border-left:1px solid #6a6a6a;box-sizing:border-box"></div>
<svg style="left:211px;top:605px;" width="7" height="7" viewBox="0 0 7 7"><rect x="0" y="0" width="1.5" height="7" fill="#000"/><path d="M6.5 0V7L2.5 3.5Z" fill="#000"/></svg>
<svg style="left:229px;top:605px;" width="5" height="7" viewBox="0 0 5 7"><path d="M4.5 0V7L0.5 3.5Z" fill="#000"/></svg>
<svg style="left:249px;top:605px;" width="5" height="7" viewBox="0 0 5 7"><path d="M0.5 0V7L4.5 3.5Z" fill="#000"/></svg>
<svg style="left:266px;top:605px;" width="7" height="7" viewBox="0 0 7 7"><path d="M0.5 0V7L4.5 3.5Z" fill="#000"/><rect x="5.5" y="0" width="1.5" height="7" fill="#000"/></svg>
<svg style="left:281px;top:599px;" width="50" height="17" viewBox="0 0 50 17"><path d="M0.5 0L8 16.5H41L49.5 0" fill="#fff" stroke="#000"/></svg>
<span style="left:290px;top:602.27px;font:bold 11.5px/1 'Liberation Sans',sans-serif;color:#000;letter-spacing:-0.349px;">Mapa</span>
<div style="left:204px;top:622px;width:1134px;height:18px;background:linear-gradient(#bdcde0,#d6e3f0)"></div>
<span style="left:208px;top:627.27px;font:normal 11.5px/1 'Liberation Sans',sans-serif;color:#000;letter-spacing:0.028px;">Interface</span>
<svg style="left:1306px;top:627px;" width="8" height="9" viewBox="0 0 8 9"><path d="M2 0H6V5H7.5V6H4.5V9H3.5V6H0.5V5H2Z" fill="#000"/><rect x="3" y="1" width="1" height="4" fill="#fff"/></svg>
<div style="left:1322px;top:626px;width:12px;height:12px;background:#c94e4e"></div>
<svg style="left:1324px;top:628px;" width="8" height="8" viewBox="0 0 8 8"><path d="M1.5 1.5L6.5 6.5M6.5 1.5L1.5 6.5" stroke="#fff" stroke-width="1.6"/></svg>
<div style="left:204px;top:642px;width:1134px;height:48px;border:1px solid #a0a0a0;border-bottom:1px solid #000;box-sizing:border-box;background:#fff"></div>
<div style="left:1319px;top:643px;width:17px;height:45px;background:#f0f0f0"></div>
<svg style="left:1323px;top:650px;" width="10" height="6" viewBox="0 0 10 6"><path d="M0.8 5.2L5 1L9.2 5.2" fill="none" stroke="#606060" stroke-width="1.6"/></svg>
<svg style="left:1323px;top:677px;" width="10" height="6" viewBox="0 0 10 6"><path d="M0.8 0.8L5 5L9.2 0.8" fill="none" stroke="#606060" stroke-width="1.6"/></svg>
<span style="left:208px;top:642.78px;font:normal 13.333px/1 'Liberation Mono',sans-serif;color:#000;">Calculando Caderneta CURTUME1.</span>
<span style="left:208px;top:658.78px;font:normal 13.333px/1 'Liberation Mono',sans-serif;color:#000;">Calculando Caderneta CURTUME2.</span>
<span style="left:208px;top:674.78px;font:normal 13.333px/1 'Liberation Mono',sans-serif;color:#000;">Calculando Caderneta CURTUME3.</span>
<div style="left:204px;top:690px;width:1134px;height:19px;background:#f0f0f0"></div>
<svg style="left:211px;top:695px;" width="7" height="7" viewBox="0 0 7 7"><rect x="0" y="0" width="1.5" height="7" fill="#000"/><path d="M6.5 0V7L2.5 3.5Z" fill="#000"/></svg>
<svg style="left:229px;top:695px;" width="5" height="7" viewBox="0 0 5 7"><path d="M4.5 0V7L0.5 3.5Z" fill="#000"/></svg>
<svg style="left:249px;top:695px;" width="5" height="7" viewBox="0 0 5 7"><path d="M0.5 0V7L4.5 3.5Z" fill="#000"/></svg>
<svg style="left:266px;top:695px;" width="7" height="7" viewBox="0 0 7 7"><path d="M0.5 0V7L4.5 3.5Z" fill="#000"/><rect x="5.5" y="0" width="1.5" height="7" fill="#000"/></svg>
<svg style="left:279px;top:689px;" width="192" height="18" viewBox="0 0 192 18"><path d="M1.5 0.5L9 16.5H73L76 11" fill="#f0f0f0" stroke="#000"/><path d="M74 0.5L82 16.5H181.5L189.5 0.5" fill="#fff" stroke="#000"/></svg>
<span style="left:294px;top:692.27px;font:normal 11.5px/1 'Liberation Sans',sans-serif;color:#000;letter-spacing:-0.639px;">Comandos</span>
<span style="left:362px;top:692.27px;font:bold 11.5px/1 'Liberation Sans',sans-serif;color:#000;letter-spacing:0.140px;">Processamentos</span>
<div style="left:783px;top:691px;width:3px;height:14px;border:1px solid #909090;box-sizing:border-box;background:#fff"></div>
<svg style="left:791px;top:694px;" width="6" height="9" viewBox="0 0 6 9"><path d="M5 0.5L1.5 4.5L5 8.5" fill="none" stroke="#404040" stroke-width="1.5"/></svg>
<div style="left:805px;top:691px;width:16px;height:15px;background:#cdcdcd"></div>
<svg style="left:1306px;top:694px;" width="6" height="9" viewBox="0 0 6 9"><path d="M1 0.5L4.5 4.5L1 8.5" fill="none" stroke="#404040" stroke-width="1.5"/></svg>
<div style="left:1338px;top:187px;width:28px;height:456px;border-right:1px solid #b9b9b9;border-bottom:1px solid #b9b9b9;box-sizing:border-box;background:#fff"></div>
<svg style="left:1341px;top:192px;" width="24" height="2" viewBox="0 0 24 2"><rect x="0" y="0" width="2" height="2" fill="#b8b8b8"/><rect x="1" y="1" width="1" height="1" fill="#8a8a8a"/><rect x="4" y="0" width="2" height="2" fill="#b8b8b8"/><rect x="5" y="1" width="1" height="1" fill="#8a8a8a"/><rect x="8" y="0" width="2" height="2" fill="#b8b8b8"/><rect x="9" y="1" width="1" height="1" fill="#8a8a8a"/><rect x="12" y="0" width="2" height="2" fill="#b8b8b8"/><rect x="13" y="1" width="1" height="1" fill="#8a8a8a"/><rect x="16" y="0" width="2" height="2" fill="#b8b8b8"/><rect x="17" y="1" width="1" height="1" fill="#8a8a8a"/><rect x="20" y="0" width="2" height="2" fill="#b8b8b8"/><rect x="21" y="1" width="1" height="1" fill="#8a8a8a"/></svg>
<svg style="left:1344px;top:200px;" width="16" height="16" viewBox="0 0 16 16"><path d="M1 1H15V5H1Z" fill="url(#rb)"/><defs><linearGradient id="rb"><stop offset="0" stop-color="#f00"/><stop offset="0.3" stop-color="#c0f"/><stop offset="0.6" stop-color="#0f0"/><stop offset="1" stop-color="#f80"/></linearGradient></defs><path d="M7 11L13 5L15 7L9 12Z" fill="#f0c0c0" stroke="#404040" stroke-width="0.6"/><path d="M2 8H6M2 11H6" stroke="#4050b0" stroke-width="1.5"/><text x="12" y="15.5" font-family="Liberation Sans" font-size="7" text-anchor="middle" fill="#000">A</text></svg>
<svg style="left:1344px;top:224px;" width="16" height="16" viewBox="0 0 16 16"><path d="M1.5 11.5L7 4.5H15.5V7.5L10.5 13.5H1.5Z" fill="#a8d8f0" stroke="#2020e0" stroke-width="1.1"/><path d="M1.5 11.5H10L15.5 5" fill="none" stroke="#2020e0" stroke-width="1.1"/></svg>
<svg style="left:1344px;top:248px;" width="16" height="16" viewBox="0 0 16 16"><path d="M5 1L9 6H1Z" fill="#2020e0"/><path d="M12 8L16 14H8Z" fill="#e02020"/><path d="M3 7V11H7" fill="none" stroke="#000" stroke-width="1.2"/><path d="M3 3H7M4 4.5H6M11 10H13M10 12H14" stroke="#fff" stroke-width="0.6"/></svg>
<svg style="left:1344px;top:272px;" width="16" height="16" viewBox="0 0 16 16"><path d="M6.5 2V14H2Z" fill="#d8ecff" stroke="#000" stroke-width="1.1"/><path d="M9.5 2V14H14Z" fill="#d8ecff" stroke="#000" stroke-width="1.1"/><path d="M8 1V15" stroke="#2020e0" stroke-width="1.2"/></svg>
<svg style="left:1344px;top:296px;" width="16" height="16" viewBox="0 0 16 16"><path d="M1.5 5.5Q1.5 2.5 5 2.5H11Q14.5 2.5 14.5 5.5Q14.5 8.5 10.5 8.5V12Q10.5 14 8 14Q5.5 14 5.5 12V8.5Q1.5 8.5 1.5 5.5Z" fill="#fff" stroke="#000" stroke-width="1.5"/><path d="M4 5.5H12M8 5.5V11" stroke="#000" stroke-width="1.1"/></svg>
<svg style="left:1344px;top:320px;" width="16" height="16" viewBox="0 0 16 16"><rect x="1.5" y="1.5" width="13" height="13" fill="none" stroke="#2020e0" stroke-width="1.2"/><rect x="4" y="4" width="8" height="8" fill="none" stroke="#000" stroke-width="1.4"/><rect x="7" y="7" width="2" height="2" fill="#000"/></svg>
<svg style="left:1344px;top:344px;" width="16" height="16" viewBox="0 0 16 16"><path d="M4.5 1.5L7.5 5H1.5Z M11.5 1.5L14.5 5H8.5Z M4.5 8.5L7.5 12H1.5Z M11.5 8.5L14.5 12H8.5Z" fill="#fff" stroke="#2020e0" stroke-width="1.1"/></svg>
<svg style="left:1344px;top:368px;" width="16" height="16" viewBox="0 0 16 16"><path d="M8 2V14M2 8H14" stroke="#2020e0" stroke-width="1.5"/><path d="M8 0L10.5 3H5.5Z M8 16L10.5 13H5.5Z M0 8L3 5.5V10.5Z M16 8L13 5.5V10.5Z" fill="#2020e0"/></svg>
<svg style="left:1344px;top:392px;" width="16" height="16" viewBox="0 0 16 16"><path d="M9.5 4.2A5 5 0 1 1 5 4.5" fill="none" stroke="#2020e0" stroke-width="2.2"/><path d="M3 1.5L8 3.5L3.5 7Z" fill="#2020e0"/></svg>
<svg style="left:1344px;top:416px;" width="16" height="16" viewBox="0 0 16 16"><rect x="1.5" y="1.5" width="12" height="13" fill="#d8ecff" stroke="#2020e0" stroke-width="1.2"/><path d="M1.5 8.5H7.5V14.5" fill="none" stroke="#807010" stroke-width="1.2"/></svg>
<svg style="left:1344px;top:440px;" width="16" height="16" viewBox="0 0 16 16"><path d="M2.5 13.5L13.5 2.5" stroke="#000" stroke-width="1" stroke-dasharray="1.5 1"/><path d="M8 8L13.5 2.5" stroke="#a01010" stroke-dasharray="1 1.2"/><circle cx="2.5" cy="13.5" r="1.5" fill="#a01010"/><circle cx="13.5" cy="2.5" r="1.5" fill="#a01010"/></svg>
<svg style="left:1344px;top:464px;" width="16" height="16" viewBox="0 0 16 16"><path d="M1 8H8" stroke="#2020e0" stroke-width="1.8"/><path d="M4 14L10 2" stroke="#2020e0" stroke-width="1.3"/><path d="M9 8H16" stroke="#a01010" stroke-width="1.5" stroke-dasharray="1.5 1"/></svg>
<svg style="left:1344px;top:488px;" width="16" height="16" viewBox="0 0 16 16"><path d="M0 8H5" stroke="#000" stroke-width="1.8"/><path d="M6 8H10" stroke="#a01010" stroke-width="1.5" stroke-dasharray="1.5 1"/><path d="M9 14L15 2" stroke="#2020e0" stroke-width="1.3"/></svg>
<svg style="left:1344px;top:512px;" width="16" height="16" viewBox="0 0 16 16"><rect x="1.5" y="5.5" width="13" height="8" fill="#d8ecff" stroke="#000" stroke-width="1.1"/><circle cx="5" cy="5" r="1.4" fill="#2020e0"/><circle cx="11" cy="5" r="1.4" fill="#2020e0"/></svg>
<svg style="left:1344px;top:536px;" width="16" height="16" viewBox="0 0 16 16"><rect x="1.5" y="5.5" width="13" height="8" fill="#d8ecff" stroke="#000" stroke-width="1.1"/><circle cx="6" cy="5" r="1.4" fill="#2020e0"/><circle cx="10" cy="5" r="1.4" fill="#2020e0"/><path d="M6 5H10" stroke="#2020e0"/></svg>
<svg style="left:1344px;top:560px;" width="16" height="16" viewBox="0 0 16 16"><path d="M2.5 15V9Q2.5 3.5 8 3.5H15" fill="none" stroke="#2020e0" stroke-width="1.3"/><path d="M2.5 3V9M2.5 3H8" stroke="#2020e0" stroke-width="1" stroke-dasharray="1 1"/></svg>
<svg style="left:1344px;top:584px;" width="16" height="16" viewBox="0 0 16 16"><path d="M2.5 15V9L8 3.5H15" fill="none" stroke="#2020e0" stroke-width="1.3"/><path d="M2.5 3V9M2.5 3H8" stroke="#2020e0" stroke-width="1" stroke-dasharray="1 1"/></svg>
<svg style="left:1344px;top:608px;" width="16" height="16" viewBox="0 0 16 16"><path d="M1.5 12.5L9 5.5L11.5 8L4 15Z" fill="#e02020" stroke="#400000" stroke-width="1"/><path d="M3 13L9 7.5" stroke="#fff" stroke-width="0.8"/><path d="M11 3L11.5 5M13.5 2L12.5 4.5M15.5 5L13 5.5M14 8L12.5 7" stroke="#c01010" stroke-width="0.9"/></svg>
<svg style="left:1346px;top:632px;" width="4" height="6" viewBox="0 0 4 6"><path d="M4 0V6L0 3Z" fill="#000"/></svg>
<div style="left:0px;top:709px;width:1366px;height:19px;background:#f0f0f0"></div>
<div style="left:0px;top:708px;width:1366px;height:1px;background:#f0f0f0"></div>
<span style="left:4px;top:715.27px;font:normal 11.5px/1 'Liberation Sans',sans-serif;color:#000;letter-spacing:0.103px;">Pronto</span>
<div style="left:855px;top:711px;width:1px;height:16px;background:#d9d9d9"></div>
<div style="left:935px;top:711px;width:1px;height:16px;background:#d9d9d9"></div>
<div style="left:1015px;top:711px;width:1px;height:16px;background:#d9d9d9"></div>
<div style="left:1070px;top:711px;width:1px;height:16px;background:#d9d9d9"></div>
<div style="left:1276px;top:711px;width:1px;height:16px;background:#d9d9d9"></div>
<div style="left:1303px;top:711px;width:1px;height:16px;background:#d9d9d9"></div>
<div style="left:1335px;top:711px;width:1px;height:16px;background:#d9d9d9"></div>
<span style="left:696px;top:714.69px;font:normal 11px/1 'Liberation Sans',sans-serif;color:#000;letter-spacing:-0.222px;">UTM | WGS84 | 23 | SUL</span>
<span style="left:860px;top:714.69px;font:normal 11px/1 'Liberation Sans',sans-serif;color:#7d7d7d;letter-spacing:-0.574px;">ELEVAÇÃO .Z</span>
<span style="left:940px;top:714.69px;font:normal 11px/1 'Liberation Sans',sans-serif;color:#7d7d7d;letter-spacing:-0.488px;">ORTOGONAL</span>
<span style="left:1020px;top:714.69px;font:normal 11px/1 'Liberation Sans',sans-serif;color:#000;letter-spacing:-1.069px;">ENGATE</span>
<span style="left:1075px;top:714.69px;font:normal 11px/1 'Liberation Sans',sans-serif;color:#000;letter-spacing:0.025px;">E=225,006 N=-4,010 Z=0,000</span>
<span style="left:1281px;top:714.69px;font:normal 11px/1 'Liberation Sans',sans-serif;color:#7d7d7d;letter-spacing:-1.039px;">CAP</span>
<span style="left:1307px;top:714.69px;font:normal 11px/1 'Liberation Sans',sans-serif;color:#000;letter-spacing:-0.017px;">NUM</span>
<span style="left:1340px;top:714.69px;font:normal 11px/1 'Liberation Sans',sans-serif;color:#7d7d7d;letter-spacing:-0.836px;">SCRL</span>
<div style="left:0px;top:709px;width:1366px;height:1px;background:#dcdcdc"></div>
<div style="left:1338px;top:700px;width:28px;height:9px;background:#fff"></div>
<div style="left:0px;top:728px;width:1366px;height:2px;background:#2b2b2b"></div>
</body></html>
